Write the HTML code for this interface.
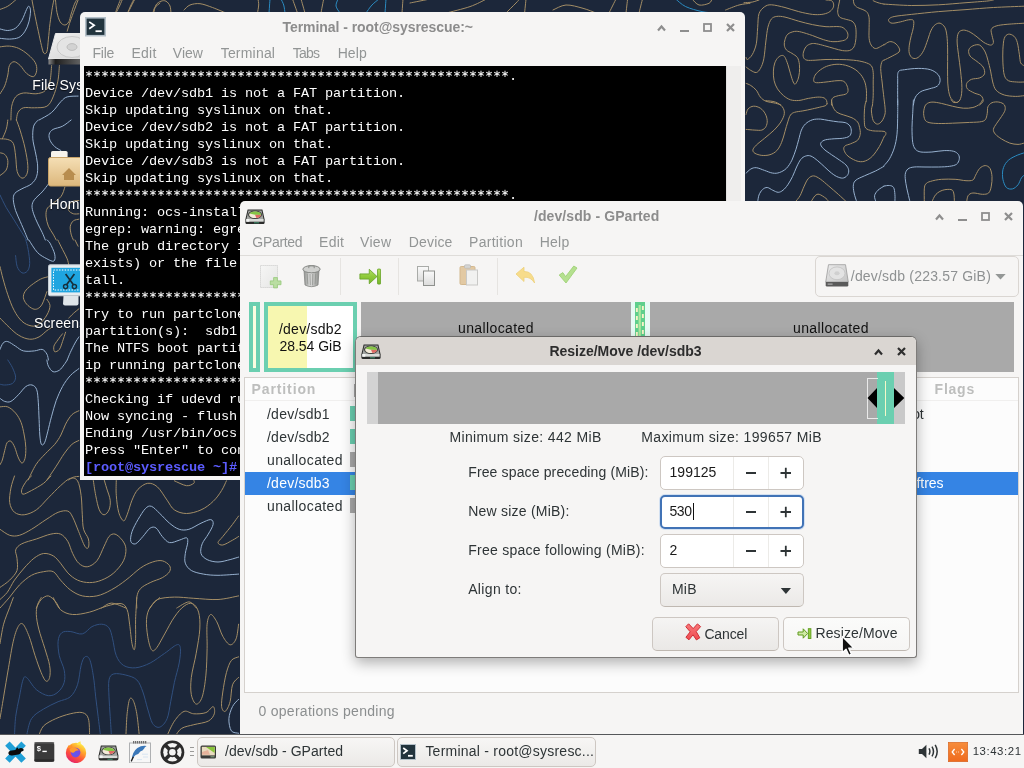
<!DOCTYPE html>
<html><head><meta charset="utf-8"><title>desktop</title>
<style>
html,body{margin:0;padding:0;}
body{width:1024px;height:768px;overflow:hidden;position:relative;background:#1c273a;font-family:'Liberation Sans',sans-serif;}
div,span.t,svg{position:absolute;box-sizing:border-box;}
span.t{white-space:pre;display:block;}
.f{font-family:'Liberation Sans',sans-serif;}
.m{font-family:'Liberation Mono',monospace;}
#root{left:0;top:0;width:1024px;height:768px;overflow:hidden;will-change:transform;}

</style></head>
<body>
<div id="root">
<svg style="left:0;top:0" width="1024" height="768" viewBox="0 0 1024 768" fill="none" stroke-width="1" stroke-linecap="round"><path stroke="#a48e66" d="M746.1 57.4C746.3 57.8 746.4 59.9 747.4 59.5C748.4 59.0 750.7 57.3 752.2 54.7C753.7 52.1 755.4 48.3 756.3 43.8C757.2 39.2 757.2 32.4 757.7 27.3C758.1 22.3 757.9 17.1 759.0 13.7C760.2 10.3 762.5 8.3 764.5 6.8C766.6 5.4 767.9 4.7 771.3 4.8C774.8 4.9 780.5 6.4 785.0 7.5C789.6 8.7 794.1 10.5 798.7 11.6C803.2 12.8 808.5 13.9 812.4 14.4C816.2 14.8 819.2 14.7 821.9 14.4C824.7 14.0 826.9 13.3 828.8 12.3C830.6 11.3 832.1 9.6 832.9 8.2C833.7 6.8 833.8 5.4 833.6 4.1C833.3 2.8 832.8 1.4 831.5 0.7C830.3 0.0 826.9 0.1 826.0 0.0M746.1 67.0C746.8 67.6 749.1 69.5 750.8 70.4C752.5 71.3 754.7 72.8 756.3 72.5C757.9 72.1 759.2 70.6 760.4 68.4C761.7 66.1 762.9 63.3 763.8 58.8C764.7 54.2 765.2 46.3 765.9 41.0C766.6 35.8 767.0 31.0 767.9 27.3C768.8 23.7 769.9 21.0 771.3 19.1C772.8 17.3 774.5 16.7 776.8 16.4C779.1 16.1 781.4 16.3 785.0 17.1C788.7 17.9 794.1 19.9 798.7 21.2C803.2 22.4 807.8 23.7 812.4 24.6C816.9 25.5 821.5 26.3 826.0 26.7C830.6 27.0 836.5 26.2 839.7 26.7C842.9 27.1 843.8 28.1 845.2 29.4C846.5 30.6 847.7 32.6 847.9 34.2C848.1 35.8 847.7 37.8 846.5 39.0C845.4 40.1 843.4 40.6 841.1 41.0C838.8 41.5 835.8 41.9 832.9 41.7C829.9 41.5 826.7 40.7 823.3 39.6C819.9 38.6 816.0 36.8 812.4 35.5C808.7 34.3 804.4 32.8 801.4 32.1C798.5 31.4 796.9 31.1 794.6 31.4C792.3 31.8 789.3 32.8 787.8 34.2C786.2 35.5 785.6 37.8 785.0 39.6C784.4 41.5 784.1 43.4 784.3 45.1C784.6 46.8 785.1 48.5 786.4 49.9C787.6 51.3 790.0 52.1 791.9 53.3C793.7 54.6 796.1 55.6 797.3 57.4C798.6 59.2 799.0 61.8 799.4 64.3C799.7 66.8 799.6 70.0 799.4 72.5C799.1 75.0 798.7 77.4 798.0 79.3C797.3 81.2 796.1 83.6 795.3 84.1C794.5 84.5 794.0 83.7 793.2 82.0C792.4 80.3 791.4 76.8 790.5 73.8C789.6 70.9 788.7 67.0 787.8 64.3C786.8 61.5 785.9 58.9 785.0 57.4C784.1 55.9 783.4 55.4 782.3 55.4C781.1 55.4 779.4 56.2 778.2 57.4C776.9 58.7 775.6 60.6 774.8 62.9C774.0 65.2 773.5 68.1 773.4 71.1C773.3 74.1 773.4 77.7 774.1 80.7C774.8 83.6 775.9 86.4 777.5 88.9C779.1 91.4 781.5 93.9 783.6 95.7C785.8 97.5 788.0 99.0 790.5 99.8C793.0 100.6 795.7 100.7 798.7 100.5C801.7 100.3 805.1 99.0 808.3 98.4C811.5 97.9 815.2 97.2 817.8 97.1C820.5 97.0 822.5 97.3 824.0 97.9C825.4 98.5 826.1 99.6 826.6 100.6C827.1 101.6 826.9 103.4 827.0 103.9M853.4 0.0C853.5 0.7 853.4 2.8 854.1 4.1C854.7 5.4 856.0 6.6 857.5 7.5C859.0 8.4 861.4 8.8 862.9 9.6C864.5 10.4 866.0 10.9 867.1 12.3C868.1 13.7 868.8 15.3 869.1 17.8C869.4 20.3 869.1 23.9 869.1 27.3C869.1 30.8 868.8 35.3 869.1 38.3C869.4 41.2 870.1 43.4 871.2 45.1C872.2 46.8 873.7 48.3 875.3 48.5C876.9 48.8 879.3 47.2 880.7 46.5C882.2 45.8 883.5 44.8 884.0 44.4M839.7 0.0C839.5 1.1 838.7 4.8 838.3 6.8C838.0 8.9 837.4 10.6 837.7 12.3C837.9 14.0 838.5 16.0 839.7 17.1C841.0 18.2 843.1 18.5 845.2 19.1C847.2 19.8 850.3 20.1 852.0 21.2C853.7 22.3 854.7 23.8 855.4 26.0C856.1 28.1 856.1 31.4 856.1 34.2C856.1 36.9 855.9 40.1 855.4 42.4C855.0 44.7 854.4 46.5 853.4 47.9C852.4 49.2 851.1 50.1 849.3 50.6C847.5 51.0 844.9 50.9 842.4 50.6C839.9 50.2 837.2 49.3 834.2 48.5C831.3 47.7 827.6 46.6 824.7 45.8C821.7 45.0 818.7 44.1 816.5 43.8C814.2 43.4 812.7 43.3 811.0 43.8C809.3 44.2 807.5 45.1 806.2 46.5C805.0 47.9 803.9 50.1 803.5 52.0C803.0 53.8 802.9 56.1 803.5 57.4C804.0 58.8 805.0 59.7 806.9 60.2C808.8 60.6 811.9 60.3 815.1 60.2C818.3 60.0 821.9 59.6 826.0 59.5C830.1 59.4 835.1 59.4 839.7 59.5C844.3 59.6 849.3 59.7 853.4 60.2C857.5 60.6 861.4 61.3 864.3 62.2C867.3 63.1 869.7 63.9 871.2 65.6C872.6 67.3 872.9 69.7 873.2 72.5C873.5 75.2 873.2 78.2 873.2 82.0C873.2 85.9 873.3 91.9 873.2 95.7C873.1 99.5 872.6 103.5 872.5 105.0M866.2 101.9C866.3 99.9 866.7 93.8 866.4 90.2C866.0 86.7 865.6 83.6 864.3 80.7C863.1 77.7 861.1 74.7 858.8 72.5C856.6 70.2 853.8 68.4 850.6 67.0C847.5 65.6 843.4 64.5 839.7 64.3C836.1 64.0 832.0 64.7 828.8 65.6C825.6 66.5 822.8 68.1 820.6 69.7C818.3 71.3 816.2 73.4 815.1 75.2C814.0 77.0 813.5 79.4 813.7 80.7C814.0 81.9 814.4 82.5 816.5 82.7C818.5 82.9 822.6 82.4 826.0 82.0C829.5 81.7 834.0 80.8 837.0 80.7C839.9 80.6 842.1 80.4 843.8 81.4C845.5 82.3 846.5 84.4 847.2 86.1C847.9 87.8 848.3 90.2 847.9 91.6C847.6 93.0 846.8 93.7 845.2 94.3C843.6 95.0 840.4 95.1 838.3 95.7C836.3 96.3 834.0 96.7 832.9 97.8C831.7 98.8 831.7 100.7 831.5 101.9C831.3 103.1 831.5 104.5 831.5 105.0M746.1 83.4C746.8 83.7 749.1 84.3 750.8 85.5C752.5 86.6 754.7 88.3 756.3 90.2C757.9 92.2 758.8 95.3 760.4 97.1C762.0 98.9 763.4 100.2 765.9 101.2C768.4 102.2 772.9 102.6 775.4 103.2C778.0 103.9 780.0 104.7 780.9 105.0M873.2 0.7C874.0 1.0 876.2 2.2 878.0 2.7C879.8 3.3 883.0 3.9 884.0 4.1M884.0 60.2C883.7 60.4 882.6 60.2 882.1 61.5C881.5 62.9 880.7 64.9 880.7 68.4C880.7 71.8 881.6 77.7 882.1 82.0C882.5 86.4 883.0 90.2 883.5 94.3C883.9 98.5 884.7 103.8 885.0 107.1C885.2 110.3 885.5 111.7 885.0 114.0C884.5 116.4 883.2 119.3 882.0 121.0C880.7 122.7 878.9 124.2 877.4 124.1C876.0 124.1 874.2 122.6 873.2 120.5C872.2 118.3 871.6 113.5 871.4 111.0C871.3 108.5 872.2 106.2 872.4 105.3M744.0 2.7C745.4 2.6 749.7 2.5 752.2 2.1C754.7 1.6 757.9 0.3 759.0 0.0M884.0 4.1C888.6 4.3 902.2 5.4 911.3 5.5C920.5 5.6 929.6 5.2 938.7 4.8C947.8 4.3 958.1 3.3 966.0 2.7C974.0 2.1 982.0 1.5 986.5 1.1C991.1 0.6 992.2 0.2 993.4 0.0M1024.0 6.2C1018.9 6.4 1003.0 7.0 993.4 7.5C983.7 8.1 975.1 8.9 966.0 9.6C956.9 10.3 947.8 10.8 938.7 11.6C929.6 12.4 918.6 13.6 911.3 14.4C904.1 15.2 898.6 15.7 894.9 16.4C891.3 17.1 890.5 17.7 889.5 18.5C888.4 19.3 888.3 20.4 888.8 21.2C889.2 22.0 890.3 23.1 892.2 23.2C894.1 23.4 897.7 22.4 900.4 21.9C903.1 21.3 906.4 20.1 908.6 19.8C910.8 19.6 912.6 19.3 913.4 20.5C914.2 21.8 913.7 24.8 913.4 27.3C913.1 29.9 912.0 32.6 911.3 35.5C910.7 38.5 909.6 42.2 909.3 45.1C909.0 48.1 908.7 51.2 909.3 53.3C909.9 55.5 911.2 57.4 912.7 58.1C914.2 58.8 916.4 58.7 918.2 57.4C920.0 56.2 922.1 53.6 923.6 50.6C925.2 47.6 926.5 43.1 927.8 39.6C929.0 36.2 929.9 32.6 931.2 30.1C932.4 27.6 933.8 25.7 935.3 24.6C936.8 23.5 938.5 22.8 940.1 23.2C941.7 23.7 943.7 25.3 944.8 27.3C946.0 29.4 946.4 32.1 946.9 35.5C947.3 39.0 947.5 43.5 947.6 47.9C947.7 52.2 947.6 56.7 947.6 61.5C947.6 66.3 947.5 72.0 947.6 76.6C947.7 81.1 947.7 85.2 948.3 88.9C948.8 92.5 949.6 96.2 951.0 98.4C952.4 100.7 954.9 102.5 956.5 102.5C958.1 102.5 959.7 100.9 960.6 98.4C961.5 95.9 961.9 92.1 961.9 87.5C961.9 82.9 961.1 76.6 960.6 71.1C960.0 65.6 959.1 59.7 958.5 54.7C957.9 49.7 957.1 44.7 957.1 41.0C957.1 37.4 957.5 34.6 958.5 32.8C959.5 31.0 961.4 30.2 963.3 30.1C965.2 30.0 967.9 31.0 970.1 32.1C972.4 33.3 974.7 35.2 977.0 36.9C979.3 38.6 981.5 41.0 983.8 42.4C986.1 43.8 989.0 45.1 990.6 45.1C992.2 45.1 993.2 44.0 993.4 42.4C993.6 40.8 992.4 37.7 992.0 35.5C991.7 33.4 990.6 31.0 991.3 29.4C992.0 27.8 993.5 26.8 996.1 26.0C998.7 25.1 1002.4 24.8 1007.1 24.3C1011.7 23.9 1021.2 23.4 1024.0 23.2M884.0 45.1C884.9 44.5 887.6 42.0 889.5 41.7C891.3 41.4 893.3 42.0 894.9 43.1C896.5 44.1 898.4 46.4 899.0 47.9C899.7 49.3 900.2 50.6 899.0 52.0C897.9 53.3 894.7 54.7 892.2 56.1C889.7 57.4 885.4 59.5 884.0 60.2M979.7 105.0C980.3 104.4 982.9 102.7 983.1 101.2C983.4 99.6 982.6 97.1 981.1 95.7C979.6 94.3 976.5 94.1 974.2 93.0C972.0 91.8 968.7 90.5 967.4 88.9C966.1 87.3 966.0 85.0 966.7 83.4C967.4 81.8 969.3 80.2 971.5 79.3C973.7 78.4 977.5 78.8 979.7 77.9C981.9 77.0 983.9 75.7 984.5 73.8C985.1 72.0 984.4 69.0 983.1 67.0C981.9 64.9 979.1 63.3 977.0 61.5C974.8 59.7 971.5 58.0 970.1 56.1C968.8 54.1 968.3 51.6 968.8 49.9C969.2 48.2 971.0 46.6 972.9 45.8C974.7 45.0 977.7 44.1 979.7 45.1C981.8 46.1 983.8 49.4 985.2 52.0C986.5 54.5 987.0 57.0 987.9 60.2C988.8 63.3 989.8 67.5 990.6 71.1C991.4 74.7 991.8 78.8 992.7 82.0C993.6 85.2 994.2 88.1 996.1 90.2C998.1 92.4 1001.1 94.0 1004.3 95.0C1007.5 96.0 1012.0 96.3 1015.3 96.4C1018.5 96.5 1022.5 95.8 1024.0 95.7M1024.0 65.6C1023.5 65.2 1021.5 64.7 1020.7 62.9C1019.9 61.1 1019.9 58.1 1019.4 54.7C1018.8 51.3 1018.2 45.5 1017.3 42.4C1016.4 39.3 1015.4 37.6 1013.9 36.2C1012.4 34.9 1010.0 33.8 1008.4 34.2C1006.8 34.5 1005.2 35.8 1004.3 38.3C1003.4 40.8 1003.2 45.1 1002.9 49.2C1002.7 53.3 1002.7 58.6 1002.9 62.9C1003.2 67.2 1003.4 72.2 1004.3 75.2C1005.2 78.2 1006.4 79.5 1008.4 80.7C1010.5 81.8 1014.0 81.8 1016.6 82.0C1019.2 82.3 1022.8 82.0 1024.0 82.0M765.9 100.7C767.5 100.9 772.7 101.0 775.4 102.1C778.2 103.1 780.8 104.9 782.3 106.8C783.8 108.8 784.6 111.2 784.3 113.7C784.1 116.2 782.6 119.1 780.9 121.9C779.2 124.6 776.8 127.3 774.1 130.1C771.3 132.8 767.5 135.8 764.5 138.3C761.5 140.8 758.2 143.2 756.3 145.1C754.4 147.1 753.1 148.5 752.9 149.9C752.7 151.3 753.5 152.4 754.9 153.3C756.4 154.2 759.3 155.1 761.8 155.4C764.3 155.6 767.5 155.5 770.0 154.7C772.5 153.9 774.9 152.6 776.8 150.6C778.8 148.5 780.2 145.6 781.6 142.4C783.0 139.2 784.0 134.9 785.0 131.4C786.0 128.0 786.8 124.6 787.8 121.9C788.7 119.1 789.3 116.6 790.5 115.0C791.6 113.4 792.5 113.0 794.6 112.3C796.6 111.6 799.8 111.5 802.8 110.9C805.8 110.4 809.3 109.6 812.4 108.9C815.4 108.2 819.0 107.4 821.2 106.8C823.5 106.3 824.8 106.0 825.8 105.5C826.7 104.9 826.8 103.9 827.0 103.6M746.1 114.4C746.4 113.4 746.8 110.3 748.1 108.9C749.4 107.5 751.5 106.3 753.6 106.2C755.6 106.0 758.5 107.0 760.4 108.2C762.3 109.5 764.1 111.6 765.2 113.7C766.3 115.7 767.1 118.3 767.2 120.5C767.4 122.7 766.8 125.1 765.9 126.7C765.0 128.3 763.6 129.5 761.8 130.1C760.0 130.6 757.6 130.2 754.9 130.1C752.3 130.0 747.5 129.5 746.1 129.4M831.5 100.0C831.7 101.1 832.0 104.8 832.9 106.8C833.8 108.9 835.1 110.9 837.0 112.3C838.8 113.7 841.3 114.1 843.8 115.0C846.3 116.0 849.7 116.6 852.0 117.8C854.3 118.9 856.2 120.3 857.5 121.9C858.7 123.5 859.1 125.3 859.5 127.3C860.0 129.4 860.6 132.0 860.2 134.2C859.9 136.3 859.1 138.7 857.5 140.3C855.9 141.9 852.7 142.8 850.6 143.8C848.6 144.7 846.3 144.9 845.2 145.8C844.0 146.7 843.6 147.7 843.8 149.2C844.0 150.7 845.2 153.1 846.5 154.7C847.9 156.3 850.0 157.7 852.0 158.8C854.1 159.9 856.6 161.2 858.8 161.5C861.1 161.9 863.4 161.8 865.7 160.8C868.0 159.9 870.2 158.4 872.5 156.1C874.8 153.7 877.4 149.7 879.4 146.5C881.3 143.3 883.2 138.5 884.0 136.9M865.8 101.6C865.6 102.7 864.8 105.1 864.6 108.2C864.3 111.3 864.1 117.2 864.3 120.5C864.5 123.8 864.3 126.3 865.7 128.0C867.1 129.7 869.5 130.2 872.5 130.8C875.6 131.3 881.8 130.9 884.0 131.4C886.2 132.0 885.9 133.0 885.9 133.9C885.9 134.8 884.3 136.4 884.0 136.9M795.3 201.9C796.1 200.8 798.6 198.3 800.1 195.7C801.5 193.1 802.8 189.0 804.2 186.1C805.5 183.3 806.7 180.3 808.3 178.6C809.9 176.9 811.7 175.8 813.7 175.9C815.8 176.0 818.1 177.6 820.6 179.3C823.1 181.0 825.8 183.6 828.8 186.1C831.7 188.6 835.4 191.7 838.3 194.3C841.3 197.0 845.2 200.6 846.5 201.9M811.0 201.9C811.7 200.8 813.7 197.0 815.1 195.7C816.5 194.5 817.4 193.9 819.2 194.3C821.0 194.8 824.4 197.2 826.0 198.4C827.6 199.7 828.3 201.3 828.8 201.9M982.4 100.0C982.0 100.7 981.3 102.8 979.7 104.1C978.1 105.4 975.6 106.8 972.9 107.5C970.1 108.2 966.7 108.4 963.3 108.2C959.9 108.0 956.0 107.0 952.4 106.2C948.7 105.4 944.8 104.1 941.4 103.4C938.0 102.7 934.4 101.9 931.9 102.1C929.3 102.2 927.6 103.1 926.4 104.1C925.1 105.1 924.8 106.6 924.3 108.2C923.9 109.8 923.5 111.7 923.6 113.7C923.8 115.6 924.1 118.3 925.0 119.8C925.9 121.3 926.8 121.9 929.1 122.6C931.4 123.2 934.8 123.4 938.7 123.5C942.6 123.6 947.8 123.4 952.4 123.2C956.9 123.1 961.5 122.8 966.0 122.6C970.6 122.3 976.5 122.3 979.7 121.9C982.9 121.4 983.9 121.2 985.2 119.8C986.4 118.5 986.8 115.8 987.2 113.7C987.7 111.5 987.1 108.7 987.9 106.8C988.7 105.0 990.2 103.5 992.0 102.7C993.8 101.9 996.8 101.7 998.8 102.1C1000.9 102.4 1003.3 103.4 1004.3 104.8C1005.3 106.2 1005.5 108.3 1005.0 110.3C1004.5 112.2 1002.9 114.2 1001.6 116.4C1000.2 118.6 998.2 121.1 996.8 123.2C995.4 125.4 993.6 127.6 993.4 129.4C993.2 131.2 994.1 132.6 995.4 134.2C996.8 135.8 999.2 137.5 1001.6 139.0C1004.0 140.4 1007.1 142.2 1009.8 143.1C1012.5 144.0 1015.6 144.4 1018.0 144.4C1020.4 144.4 1023.0 143.3 1024.0 143.1M951.0 100.0C951.5 100.4 952.6 102.1 953.7 102.5C954.9 102.8 956.8 102.5 957.8 102.1C958.9 101.6 959.5 100.3 959.9 100.0M924.3 201.9C924.3 199.7 924.1 191.8 924.3 188.9C924.6 185.9 924.7 185.3 925.7 184.1C926.7 182.8 927.9 182.1 930.5 181.4C933.1 180.6 937.3 179.6 941.4 179.3C945.5 179.0 951.0 179.1 955.1 179.3C959.2 179.5 963.1 180.6 966.0 180.7C969.0 180.8 971.3 180.9 972.9 180.0C974.5 179.1 974.5 177.1 975.6 175.2C976.7 173.3 978.1 170.0 979.7 168.4C981.3 166.8 983.5 165.6 985.2 165.6C986.9 165.6 988.8 166.5 990.0 168.4C991.1 170.2 991.8 173.6 992.0 176.6C992.2 179.5 991.9 183.4 991.3 186.1C990.8 188.9 990.1 191.6 988.6 193.0C987.1 194.3 985.1 194.3 982.4 194.3C979.8 194.3 975.3 192.7 972.9 193.0C970.5 193.2 969.1 194.2 968.1 195.7C967.1 197.2 966.9 200.8 966.7 201.9M931.9 201.9C932.5 200.6 934.1 196.3 936.0 194.3C937.8 192.4 940.3 191.0 942.8 190.2C945.3 189.4 949.2 189.1 951.0 189.6C952.8 190.0 953.2 190.9 953.7 193.0C954.3 195.0 954.3 200.4 954.4 201.9M0.0 9.4C1.3 8.9 5.2 7.8 7.8 6.2C10.4 4.7 14.3 1.0 15.6 0.0M32.0 0.0C32.4 2.1 33.3 7.3 34.4 12.5C35.4 17.7 37.1 25.8 38.3 31.2C39.5 36.7 40.5 41.7 41.4 45.3C42.3 49.0 42.8 52.1 43.8 53.1C44.7 54.2 46.1 53.9 46.9 51.6C47.7 49.2 47.9 43.8 48.4 39.1C49.0 34.4 49.3 28.6 50.0 23.4C50.7 18.2 51.7 11.7 52.3 7.8C53.0 3.9 53.6 1.3 53.9 0.0M55.5 0.0C55.7 2.1 56.2 8.9 57.0 12.5C57.8 16.1 58.9 19.8 60.2 21.9C61.5 24.0 63.4 25.0 64.8 25.0C66.3 25.0 67.7 23.7 68.8 21.9C69.8 20.1 70.2 16.9 71.1 14.1C72.0 11.2 73.3 7.0 74.2 4.7C75.1 2.3 76.2 0.8 76.6 0.0M78.1 0.0C77.3 2.1 74.9 8.6 73.4 12.5C72.0 16.4 70.6 20.3 69.5 23.4C68.5 26.6 67.6 29.9 67.2 31.2M0.0 46.9C1.6 46.7 6.2 45.8 9.4 46.1C12.5 46.4 15.6 47.0 18.8 48.4C21.9 49.9 25.4 52.3 28.1 54.7C30.9 57.0 33.7 59.9 35.2 62.5C36.6 65.1 37.0 68.0 36.7 70.3C36.5 72.7 35.3 76.0 33.6 76.6C31.9 77.1 28.8 75.3 26.6 73.4C24.3 71.6 22.4 67.6 20.3 65.6C18.2 63.7 15.9 61.7 14.1 61.7C12.2 61.7 10.4 63.4 9.4 65.6C8.3 67.8 8.6 71.6 7.8 75.0C7.0 78.4 6.0 82.8 4.7 85.9C3.4 89.1 0.8 92.4 0.0 93.8M51.6 65.6C51.3 68.2 51.0 77.1 50.0 81.2C49.0 85.4 47.7 88.5 45.3 90.6C43.0 92.7 39.6 93.4 35.9 93.8C32.3 94.1 26.8 92.4 23.4 93.0C20.1 93.5 17.6 94.7 15.6 96.9C13.7 99.1 12.5 102.4 11.7 106.2C10.9 110.1 11.1 117.7 10.9 120.0M59.4 65.6C59.1 68.2 58.9 76.0 57.8 81.2C56.8 86.5 54.9 92.7 53.1 96.9C51.3 101.0 50.0 104.4 46.9 106.2C43.8 108.1 38.3 107.6 34.4 107.8C30.5 108.1 26.2 107.0 23.4 107.8C20.7 108.6 19.1 110.5 18.0 112.5C16.8 114.5 16.7 118.8 16.4 120.0M120.3 0.0C119.8 1.3 118.0 5.7 117.2 7.8C116.4 9.9 115.9 11.7 115.6 12.5M134.4 0.0C133.6 1.6 130.7 7.3 129.7 9.4C128.6 11.5 128.4 12.0 128.1 12.5M160.0 3.1C159.1 3.9 155.8 6.2 154.7 7.8C153.5 9.4 153.4 11.7 153.1 12.5M0.0 138.8C1.3 138.9 5.6 138.8 7.8 139.5C10.0 140.3 12.0 140.7 13.3 143.4C14.6 146.2 15.0 151.2 15.6 155.9C16.3 160.6 16.1 167.9 17.2 171.6C18.2 175.3 20.3 177.6 21.9 178.1C23.4 178.6 25.6 176.8 26.6 174.7C27.6 172.6 28.1 169.7 27.8 165.3C27.6 160.9 26.2 153.9 25.0 148.1C23.8 142.4 21.7 135.6 20.3 130.9C18.9 126.2 17.1 121.8 16.4 120.0M7.8 120.0C7.6 121.6 7.2 126.2 6.2 129.4C5.3 132.5 3.0 137.2 2.3 138.8M0.0 152.8C0.8 153.1 3.4 153.1 4.7 154.4C6.0 155.7 7.6 158.0 7.8 160.6C8.1 163.2 7.6 167.5 6.2 170.0C4.9 172.5 1.0 174.6 0.0 175.5M64.8 187.2C64.2 188.8 63.2 193.7 60.9 196.6C58.7 199.4 53.9 202.3 51.6 204.4C49.2 206.5 47.8 207.0 46.9 209.1C46.0 211.1 45.8 214.0 46.1 216.9C46.4 219.7 47.3 223.4 48.4 226.2C49.6 229.1 51.8 231.8 53.1 234.1C54.4 236.4 55.7 239.0 56.2 240.0M78.9 200.5C78.0 200.6 75.1 200.5 73.4 201.2C71.7 202.0 69.5 203.6 68.8 205.2C68.0 206.7 68.0 209.2 68.8 210.6C69.5 212.1 71.7 213.2 73.4 213.8C75.1 214.3 78.0 213.8 78.9 213.8M78.9 219.2C78.0 219.5 74.9 219.6 73.4 220.8C72.0 222.0 70.7 224.0 70.3 226.2C69.9 228.5 70.6 231.8 71.1 234.1C71.6 236.4 73.0 239.0 73.4 240.0M0.0 266.6C0.5 268.6 1.8 274.4 3.1 279.1C4.4 283.8 6.0 289.5 7.8 294.7C9.6 299.9 11.7 305.9 14.1 310.3C16.4 314.7 19.0 318.6 21.9 321.2C24.7 323.9 28.4 325.4 31.2 325.9C34.1 326.5 36.5 326.2 39.1 324.4C41.7 322.6 45.1 318.1 46.9 315.0C48.7 311.9 50.0 308.2 50.0 305.6C50.0 303.0 47.4 300.4 46.9 299.4M48.4 276.7C47.1 277.1 43.5 277.6 40.6 279.1C37.8 280.5 33.9 283.2 31.2 285.3C28.6 287.4 26.3 289.5 25.0 291.6C23.7 293.6 23.2 295.7 23.4 297.8C23.7 299.9 25.0 302.2 26.6 304.1C28.1 305.9 31.0 308.0 32.8 308.8C34.6 309.5 35.9 309.5 37.5 308.8C39.1 308.0 40.6 306.9 42.2 304.1C43.8 301.2 46.1 293.6 46.9 291.6M57.8 240.0C58.6 241.6 60.9 246.2 62.5 249.4C64.1 252.5 66.1 256.1 67.2 258.8C68.2 261.4 68.5 264.0 68.8 265.0M75.0 240.0C75.5 241.0 77.6 245.2 78.1 246.2M0.0 318.1C1.6 319.7 6.2 324.6 9.4 327.5C12.5 330.4 15.4 333.4 18.8 335.3C22.1 337.3 26.3 339.0 29.7 339.2C33.1 339.5 36.2 338.3 39.1 336.9C41.9 335.4 44.8 332.2 46.9 330.6C49.0 329.1 50.8 328.0 51.6 327.5M62.5 333.8C61.7 334.8 59.2 337.9 57.8 340.0C56.4 342.1 54.4 344.3 53.9 346.2C53.4 348.2 53.8 351.2 54.7 351.7C55.6 352.2 58.1 351.1 59.4 349.4C60.7 347.7 61.5 344.4 62.5 341.6C63.5 338.7 65.1 333.8 65.6 332.2M78.9 308.8C78.0 309.5 75.1 311.9 73.4 313.4C71.7 315.0 69.5 317.3 68.8 318.1M0.0 406.9C1.3 406.9 5.2 405.8 7.8 406.9C10.4 407.9 13.4 410.5 15.6 413.1C17.8 415.7 19.7 418.9 21.1 422.5C22.5 426.1 23.4 430.8 24.2 435.0C25.0 439.2 25.7 443.6 25.8 447.5C25.9 451.4 25.7 455.8 25.0 458.4C24.3 461.0 23.0 463.4 21.9 463.1C20.7 462.9 19.1 459.5 18.0 456.9C16.8 454.3 16.0 450.1 14.8 447.5C13.7 444.9 12.2 442.0 10.9 441.2C9.6 440.5 8.1 441.2 7.0 442.8C6.0 444.4 5.5 447.8 4.7 450.6C3.9 453.5 3.1 457.7 2.3 460.0C1.6 462.3 0.4 463.9 0.0 464.7M78.9 410.8C77.7 411.4 74.1 412.5 71.9 414.7C69.7 416.9 67.4 420.7 65.6 424.1C63.8 427.4 62.8 431.6 60.9 435.0C59.1 438.4 57.3 441.2 54.7 444.4C52.1 447.5 48.4 450.4 45.3 453.8C42.2 457.1 38.8 460.3 35.9 464.7C33.1 469.1 29.4 477.4 28.1 480.0M78.9 440.5C77.7 441.1 74.3 442.2 71.9 444.4C69.4 446.6 66.7 450.1 64.1 453.8C61.5 457.4 59.1 461.9 56.2 466.2C53.4 470.6 48.4 477.7 46.9 480.0M78.9 476.4C78.0 476.5 75.1 476.6 73.4 477.2C71.7 477.8 69.5 479.5 68.8 480.0M50.9 476.0C49.6 477.2 46.8 480.8 43.6 483.3C40.4 485.7 34.9 488.7 31.5 490.5C28.1 492.3 24.6 494.4 23.0 494.2C21.4 494.0 21.2 491.5 21.8 489.3C22.4 487.1 25.0 483.1 26.6 480.8C28.3 478.6 30.7 476.8 31.5 476.0M14.5 476.0C13.9 478.0 11.7 483.7 10.9 488.1C10.1 492.5 9.1 498.6 9.7 502.6C10.3 506.7 12.1 510.3 14.5 512.3C17.0 514.3 20.6 515.2 24.2 514.8C27.9 514.3 32.3 512.7 36.3 509.9C40.4 507.1 44.4 501.8 48.4 497.8C52.5 493.8 56.9 488.9 60.5 485.7C64.2 482.5 67.4 479.2 70.2 478.4C73.1 477.6 75.7 478.0 77.5 480.8C79.3 483.7 80.3 489.7 81.1 495.4C81.9 501.0 81.9 509.1 82.3 514.8C82.7 520.4 82.5 525.2 83.6 529.3C84.6 533.3 87.6 535.9 88.4 539.0C89.2 542.0 89.0 546.2 88.4 547.4C87.8 548.7 86.4 548.9 84.8 546.2C83.2 543.6 80.7 536.5 78.7 531.7C76.7 526.9 74.5 520.6 72.7 517.2C70.8 513.7 70.2 511.9 67.8 511.1C65.4 510.3 61.8 510.9 58.1 512.3C54.5 513.7 50.5 516.8 46.0 519.6C41.6 522.4 35.9 526.7 31.5 529.3C27.0 531.9 23.0 534.3 19.4 535.3C15.7 536.3 12.9 536.3 9.7 535.3C6.5 534.3 1.6 530.3 0.0 529.3M93.2 479.6C93.6 482.3 94.7 490.3 95.7 495.4C96.7 500.4 97.9 506.7 99.3 509.9C100.7 513.1 102.5 514.8 104.1 514.8C105.8 514.8 108.0 512.3 109.0 509.9C110.0 507.5 110.6 503.9 110.2 500.2C109.8 496.6 107.6 491.5 106.6 488.1C105.6 484.7 104.5 481.0 104.1 479.6M116.3 479.6C116.3 482.3 115.8 489.9 116.3 495.4C116.7 500.8 117.5 508.1 118.7 512.3C119.9 516.6 122.1 520.4 123.5 520.8C124.9 521.2 125.7 518.2 127.1 514.8C128.6 511.3 130.2 504.5 132.0 500.2C133.8 496.0 135.4 492.1 138.0 489.3C140.7 486.5 144.5 483.7 147.7 483.3C151.0 482.9 154.2 484.1 157.4 486.9C160.7 489.7 164.3 496.4 167.1 500.2C169.9 504.1 171.1 507.7 174.4 509.9C177.6 512.1 182.0 513.5 186.5 513.5C190.9 513.5 196.6 511.9 201.0 509.9C205.5 507.9 209.7 504.7 213.1 501.4C216.6 498.2 219.4 494.0 221.6 490.5C223.8 487.1 225.6 482.5 226.4 480.8M174.4 480.8C176.4 481.7 183.3 485.3 186.5 485.7C189.7 486.1 192.5 484.2 193.8 483.3C195.0 482.4 193.8 480.8 193.8 480.4M0.0 587.4C1.6 586.2 6.9 583.0 9.7 580.1C12.5 577.3 15.7 574.1 17.0 570.5C18.2 566.8 17.2 561.8 17.0 558.3C16.8 554.9 14.9 552.3 15.7 549.9C16.5 547.4 18.4 545.6 21.8 543.8C25.2 542.0 31.5 540.6 36.3 539.0C41.2 537.4 46.8 534.9 50.9 534.1C54.9 533.3 57.7 532.9 60.5 534.1C63.4 535.3 65.8 538.2 67.8 541.4C69.8 544.6 70.8 549.9 72.7 553.5C74.5 557.1 76.3 561.0 78.7 563.2C81.1 565.4 84.2 567.2 87.2 566.8C90.2 566.4 94.1 564.2 96.9 560.8C99.7 557.3 102.1 550.3 104.1 546.2C106.2 542.2 107.2 538.6 109.0 536.5C110.8 534.5 112.8 533.5 115.0 534.1C117.3 534.7 120.5 537.8 122.3 540.2C124.1 542.6 125.7 545.2 125.9 548.7C126.1 552.1 125.5 556.7 123.5 560.8C121.5 564.8 117.5 569.6 113.8 572.9C110.2 576.1 105.8 578.5 101.7 580.1C97.7 581.8 93.6 582.6 89.6 582.6C85.6 582.6 81.1 581.8 77.5 580.1C73.9 578.5 70.6 575.7 67.8 572.9C65.0 570.1 63.0 566.0 60.5 563.2C58.1 560.4 56.1 557.5 53.3 555.9C50.5 554.3 46.8 553.1 43.6 553.5C40.4 553.9 37.1 555.9 33.9 558.3C30.7 560.8 27.4 564.4 24.2 568.0C21.0 571.7 17.4 576.1 14.5 580.1C11.7 584.2 9.7 589.0 7.3 592.3C4.8 595.5 1.2 598.3 0.0 599.5M0.0 608.0C1.6 606.2 6.5 600.9 9.7 597.1C12.9 593.3 15.7 588.6 19.4 585.0C23.0 581.4 27.4 577.5 31.5 575.3C35.5 573.1 40.0 572.3 43.6 571.7C47.2 571.1 50.5 570.3 53.3 571.7C56.1 573.1 57.7 577.1 60.5 580.1C63.4 583.2 66.6 587.2 70.2 589.8C73.9 592.5 77.9 594.9 82.3 595.9C86.8 596.9 92.0 596.9 96.9 595.9C101.7 594.9 106.6 592.5 111.4 589.8C116.3 587.2 121.1 583.8 125.9 580.1C130.8 576.5 136.0 571.1 140.5 568.0C144.9 565.0 148.9 563.2 152.6 562.0C156.2 560.8 159.4 560.2 162.3 560.8C165.1 561.4 168.3 563.8 169.5 565.6C170.7 567.4 170.7 569.6 169.5 571.7C168.3 573.7 165.5 575.9 162.3 577.7C159.0 579.5 153.8 580.7 150.2 582.6C146.5 584.4 142.7 586.2 140.5 588.6C138.2 591.0 137.4 593.9 136.8 597.1C136.2 600.3 136.8 606.2 136.8 608.0M238.6 516.0C237.5 517.4 235.1 521.0 232.5 524.4C229.9 527.9 225.2 533.5 222.8 536.5C220.4 539.6 218.0 541.2 218.0 542.6C218.0 544.0 220.4 545.4 222.8 545.0C225.2 544.6 229.9 541.6 232.5 540.2C235.1 538.8 237.5 537.2 238.6 536.5M36.3 608.0C37.1 606.6 39.2 601.5 41.2 599.5C43.2 597.5 46.0 595.5 48.4 595.9C50.9 596.3 53.9 599.9 55.7 601.9C57.5 604.0 58.7 607.0 59.3 608.0M150.2 608.0C151.4 606.6 153.4 601.3 157.4 599.5C161.5 597.7 168.3 597.3 174.4 597.1C180.4 596.9 186.5 597.9 193.8 598.3C201.0 598.7 210.5 599.9 218.0 599.5C225.4 599.1 235.1 596.5 238.6 595.9M176.8 608.0C178.8 607.0 185.7 601.9 188.9 601.9C192.1 601.9 195.0 607.0 196.2 608.0M101.7 608.0C103.3 607.2 107.4 603.1 111.4 603.1C115.4 603.1 123.5 607.2 125.9 608.0M0.0 718.7C0.6 715.0 2.2 705.4 3.6 696.9C5.0 688.4 6.9 677.1 8.5 667.8C10.1 658.5 11.7 648.0 13.3 641.2C14.9 634.3 16.5 629.5 18.2 626.6C19.8 623.8 21.2 622.6 23.0 624.2C24.8 625.8 27.0 631.1 29.1 636.3C31.1 641.6 33.1 649.6 35.1 655.7C37.1 661.8 39.4 668.4 41.2 672.7C43.0 676.9 44.6 680.3 46.0 681.1C47.4 681.9 49.0 680.1 49.6 677.5C50.3 674.9 50.5 670.2 49.6 665.4C48.8 660.5 46.6 654.5 44.8 648.4C43.0 642.4 40.2 634.7 38.8 629.1C37.3 623.4 36.5 618.6 36.3 614.5C36.1 610.5 36.7 607.7 37.5 604.8C38.3 602.0 40.6 598.8 41.2 597.6M53.3 597.6C54.5 599.6 57.3 606.9 60.5 609.7C63.8 612.5 67.8 614.1 72.7 614.5C77.5 614.9 84.0 613.5 89.6 612.1C95.3 610.7 101.3 607.5 106.6 606.1C111.8 604.6 117.7 603.0 121.1 603.6C124.5 604.2 125.7 606.3 127.1 609.7C128.6 613.1 128.8 618.6 129.6 624.2C130.4 629.9 131.2 639.4 132.0 643.6C132.8 647.8 133.8 650.5 134.4 649.6C135.0 648.8 135.4 643.8 135.6 638.8C135.8 633.7 135.4 626.2 135.6 619.4C135.8 612.5 136.6 601.2 136.8 597.6M159.8 597.6C158.2 599.2 152.4 603.6 150.2 607.3C147.9 610.9 146.9 614.5 146.5 619.4C146.1 624.2 146.9 631.3 147.7 636.3C148.5 641.4 150.0 647.6 151.4 649.6C152.8 651.7 154.0 651.1 156.2 648.4C158.4 645.8 161.7 639.2 164.7 633.9C167.7 628.7 171.1 621.6 174.4 617.0C177.6 612.3 181.0 608.3 184.1 606.1C187.1 603.8 190.1 602.6 192.5 603.6C195.0 604.6 197.4 607.9 198.6 612.1C199.8 616.3 200.2 622.2 199.8 629.1C199.4 635.9 197.6 645.2 196.2 653.3C194.8 661.4 192.1 670.6 191.3 677.5C190.5 684.4 190.5 690.0 191.3 694.5C192.1 698.9 194.4 703.7 196.2 704.1C198.0 704.5 200.6 701.7 202.2 696.9C203.8 692.0 205.1 683.2 205.9 675.1C206.7 667.0 206.9 656.9 207.1 648.4C207.3 640.0 206.5 629.9 207.1 624.2C207.7 618.6 209.1 614.9 210.7 614.5C212.3 614.1 214.7 618.2 216.8 621.8C218.8 625.4 220.6 632.5 222.8 636.3C225.0 640.2 227.9 644.4 230.1 644.8C232.3 645.2 234.7 642.2 236.1 638.8C237.5 635.3 238.2 626.6 238.6 624.2M238.6 656.9C237.3 657.5 233.3 657.9 231.3 660.5C229.3 663.2 227.9 667.4 226.4 672.7C225.0 677.9 223.6 686.4 222.8 692.0C222.0 697.7 221.2 703.3 221.6 706.6C222.0 709.8 223.8 712.2 225.2 711.4C226.6 710.6 228.9 706.2 230.1 701.7C231.3 697.3 231.1 688.8 232.5 684.8C233.9 680.7 237.5 678.7 238.6 677.5M38.8 735.6C39.6 734.0 40.8 728.8 43.6 725.9C46.4 723.1 51.3 720.7 55.7 718.7C60.1 716.7 65.8 714.8 70.2 713.8C74.7 712.8 79.3 711.8 82.3 712.6C85.4 713.4 87.2 714.8 88.4 718.7C89.6 722.5 89.4 732.8 89.6 735.6M125.9 735.6C126.1 732.0 126.5 719.9 127.1 713.8C127.8 707.8 128.6 701.5 129.6 699.3C130.6 697.1 132.0 698.1 133.2 700.5C134.4 702.9 135.8 708.0 136.8 713.8C137.8 719.7 138.9 732.0 139.3 735.6M167.1 735.6C168.3 733.2 171.6 725.1 174.4 721.1C177.2 717.1 180.8 712.6 184.1 711.4C187.3 710.2 190.1 713.6 193.8 713.8C197.4 714.0 202.6 713.8 205.9 712.6C209.1 711.4 211.7 706.4 213.1 706.6C214.5 706.8 215.1 711.4 214.3 713.8C213.5 716.3 211.7 719.3 208.3 721.1C204.9 722.9 198.2 723.5 193.8 724.7C189.3 725.9 184.7 726.5 181.6 728.4C178.6 730.2 176.6 734.4 175.6 735.6M0.0 643.6C0.6 640.4 2.0 630.3 3.6 624.2C5.2 618.2 8.1 611.7 9.7 607.3C11.3 602.8 12.7 599.2 13.3 597.6M116.0 13.0C116.7 11.7 118.9 7.3 120.0 5.0C121.1 2.7 122.1 0.0 122.5 -1.0M127.5 13.0C128.1 11.7 129.9 7.3 131.0 5.0C132.1 2.7 133.5 0.0 134.0 -1.0M153.7 13.0C154.1 11.7 154.8 7.0 156.0 5.0C157.2 3.0 159.3 1.8 161.0 1.2C162.7 0.6 164.5 0.4 166.0 1.2C167.5 2.0 169.2 4.0 170.0 6.0C170.8 8.0 170.8 11.8 171.0 13.0M184.0 10.0C185.0 9.2 187.3 6.0 190.0 5.0C192.7 4.0 196.2 3.3 200.0 3.7C203.8 4.1 208.2 6.0 212.5 7.5C216.8 9.1 223.8 12.1 226.0 13.0M257.5 13.0C257.7 11.7 258.6 7.3 258.7 5.0C258.8 2.7 258.1 0.0 258.0 -1.0M292.5 -1.0C293.3 1.3 296.7 10.7 297.5 13.0M301.0 -1.0C301.7 1.3 304.3 10.7 305.0 13.0M321.0 13.0C321.4 10.7 323.2 1.3 323.7 -1.0M402.0 13.0C402.2 10.7 402.8 1.3 403.0 -1.0M410.0 3.0C413.3 2.3 426.7 -0.3 430.0 -1.0M446.5 13.0C450.4 11.9 463.3 8.9 470.0 6.6C476.7 4.3 483.8 0.3 486.5 -1.0M506.0 13.0C507.7 11.3 513.7 5.3 516.0 3.0C518.3 0.7 519.0 -0.3 519.6 -1.0M524.6 13.0C524.8 10.7 525.8 1.3 526.0 -1.0M553.0 10.0C555.2 9.2 561.0 5.3 566.0 5.0C571.0 4.7 578.0 7.0 583.0 8.3C588.0 9.6 593.8 12.2 596.0 13.0M609.0 13.0C610.2 10.7 614.8 1.3 616.0 -1.0M626.0 13.0C626.3 10.7 627.3 1.3 627.6 -1.0M639.0 13.0C639.6 10.7 641.9 1.3 642.5 -1.0M692.0 -1.0C693.2 0.0 696.2 4.3 699.0 5.0C701.8 5.7 706.8 4.3 709.0 3.3C711.2 2.3 711.5 -0.3 712.0 -1.0M725.6 10.0C727.8 9.2 734.9 6.1 739.0 5.0C743.1 3.9 748.2 3.6 750.0 3.3"/><path stroke="#97b1cf" d="M897.7 105.0C897.7 101.2 897.6 87.6 897.7 82.0C897.8 76.5 897.2 73.8 898.4 71.8C899.5 69.7 901.2 70.3 904.5 69.7C907.8 69.2 913.9 68.4 918.2 68.4C922.5 68.4 927.2 68.7 930.5 69.7C933.8 70.8 936.4 72.7 938.0 74.5C939.6 76.3 940.2 78.7 940.1 80.7C939.9 82.6 939.1 84.8 937.3 86.1C935.5 87.5 931.9 88.0 929.1 88.9C926.4 89.8 923.2 90.2 920.9 91.6C918.6 93.0 916.7 94.8 915.4 97.1C914.2 99.3 913.7 103.7 913.4 105.0M746.1 173.1C746.8 172.5 749.1 170.0 750.8 169.0C752.5 168.1 754.0 167.5 756.3 167.7C758.6 167.9 761.8 169.5 764.5 170.4C767.2 171.3 770.2 172.8 772.7 173.1C775.2 173.5 777.3 173.3 779.5 172.5C781.8 171.7 784.3 170.4 786.4 168.4C788.4 166.3 790.3 163.3 791.9 160.2C793.4 157.0 794.8 152.6 796.0 149.2C797.1 145.8 797.8 142.8 798.7 139.6C799.6 136.5 800.3 132.7 801.4 130.1C802.6 127.5 803.7 125.6 805.5 123.9C807.3 122.2 809.9 120.6 812.4 119.8C814.9 119.0 817.8 119.0 820.6 119.1C823.3 119.3 825.8 120.1 828.8 120.5C831.7 121.0 835.6 121.5 838.3 121.9C841.1 122.2 843.2 121.9 845.2 122.6C847.1 123.2 848.9 124.5 850.0 126.0C851.0 127.5 851.4 129.7 851.3 131.4C851.2 133.2 850.8 135.1 849.3 136.2C847.8 137.4 845.4 137.8 842.4 138.3C839.5 138.7 834.6 138.6 831.5 139.0C828.4 139.3 825.8 139.5 824.0 140.3C822.2 141.1 820.7 142.4 820.6 143.8C820.5 145.1 821.5 146.7 823.3 148.5C825.1 150.4 828.8 152.8 831.5 154.7C834.2 156.6 837.3 158.4 839.7 160.2C842.1 161.9 844.4 163.3 845.9 164.9C847.3 166.5 848.3 168.1 848.6 169.7C848.9 171.3 848.7 173.1 847.9 174.5C847.1 175.9 845.4 177.5 843.8 177.9C842.2 178.4 840.4 178.0 838.3 177.2C836.3 176.5 833.8 174.9 831.5 173.1C829.2 171.4 826.9 169.0 824.7 167.0C822.4 164.9 820.1 162.7 817.8 160.8C815.6 159.0 813.0 156.9 811.0 156.1C808.9 155.3 807.2 155.5 805.5 156.1C803.8 156.6 802.2 157.7 800.7 159.5C799.3 161.3 798.0 164.1 796.6 167.0C795.3 169.8 794.0 173.6 792.5 176.6C791.1 179.5 789.3 182.5 787.8 184.8C786.2 187.0 784.6 189.0 783.0 190.2C781.4 191.5 779.9 192.3 778.2 192.3C776.5 192.3 774.5 191.0 772.7 190.2C770.9 189.4 769.0 187.6 767.2 187.5C765.5 187.4 763.8 188.3 762.5 189.6C761.1 190.8 759.8 193.0 759.0 195.0C758.2 197.1 757.9 200.7 757.7 201.9M884.0 166.3C882.5 167.1 878.5 169.5 875.3 171.1C872.0 172.7 867.5 174.4 864.3 175.9C861.1 177.4 857.9 178.5 856.1 180.0C854.3 181.5 853.7 182.6 853.4 184.8C853.0 186.9 853.5 190.1 854.1 193.0C854.6 195.8 856.3 200.4 856.8 201.9M884.0 186.1C883.0 186.8 879.6 188.6 878.0 190.2C876.4 191.8 874.9 193.8 874.6 195.7C874.2 197.6 875.7 200.8 875.9 201.9M897.7 100.0C897.7 102.3 897.8 108.0 897.7 113.7C897.6 119.4 897.6 128.5 897.0 134.2C896.4 139.9 895.5 143.8 894.3 147.9C893.0 152.0 891.2 155.8 889.5 158.8C887.8 161.8 884.9 164.5 884.0 165.6M913.4 100.0C913.3 102.3 912.9 109.1 912.7 113.7C912.5 118.2 912.0 122.6 912.0 127.3C912.0 132.1 912.1 138.7 912.7 142.4C913.3 146.0 914.1 147.6 915.4 149.2C916.8 150.8 918.2 151.5 920.9 152.0C923.6 152.4 928.0 152.2 931.9 152.0C935.7 151.7 940.5 150.7 944.2 150.6C947.8 150.5 951.3 150.6 953.7 151.3C956.1 152.0 957.6 153.3 958.5 154.7C959.4 156.1 959.5 157.9 959.2 159.5C958.9 161.1 958.1 163.1 956.5 164.3C954.9 165.4 952.6 165.9 949.6 166.3C946.7 166.8 942.8 166.9 938.7 167.0C934.6 167.1 929.1 167.0 925.0 167.0C920.9 167.0 916.9 166.7 914.1 167.0C911.2 167.3 909.4 167.8 907.9 169.0C906.4 170.3 905.5 172.1 905.2 174.5C904.9 176.9 905.4 180.3 905.9 183.4C906.3 186.5 907.2 189.9 907.9 193.0C908.6 196.0 909.6 200.4 910.0 201.9M884.0 186.1C884.9 186.0 887.9 185.2 889.5 185.5C891.1 185.7 892.7 186.0 893.6 187.5C894.5 189.0 894.7 191.9 894.9 194.3C895.2 196.7 894.9 200.6 894.9 201.9M0.0 28.9C1.3 29.2 5.2 30.6 7.8 30.5C10.4 30.3 13.3 29.8 15.6 28.1C18.0 26.4 20.1 23.4 21.9 20.3C23.7 17.2 25.4 11.7 26.6 9.4C27.7 7.0 28.3 6.0 28.9 6.2C29.6 6.5 30.5 8.3 30.5 10.9C30.5 13.5 29.8 18.5 28.9 21.9C28.0 25.3 26.7 28.6 25.0 31.2C23.3 33.9 21.4 36.2 18.8 37.5C16.1 38.8 12.5 38.9 9.4 39.1C6.2 39.2 1.6 38.4 0.0 38.3M39.1 120.0C41.1 118.8 47.9 115.6 51.6 112.5C55.2 109.4 58.3 104.2 60.9 101.6C63.5 99.0 64.3 97.8 67.2 96.9C70.1 96.0 76.3 96.2 78.1 96.1M38.3 120.0C37.5 121.0 34.5 123.1 33.6 126.2C32.7 129.4 32.6 134.6 32.8 138.8C33.1 142.9 34.4 147.1 35.2 151.2C35.9 155.4 37.2 159.6 37.5 163.8C37.8 167.9 37.8 172.9 36.7 176.2C35.7 179.6 33.7 182.0 31.2 184.1C28.8 186.1 24.6 187.2 21.9 188.8C19.1 190.3 16.3 191.6 14.8 193.4C13.4 195.3 13.2 196.8 13.3 199.7C13.4 202.6 14.5 207.0 15.6 210.6C16.8 214.3 18.8 217.9 20.3 221.6C21.9 225.2 23.7 229.4 25.0 232.5C26.3 235.6 27.6 238.8 28.1 240.0M71.1 120.0C69.7 121.0 65.5 124.7 62.5 126.2C59.5 127.8 55.3 128.1 53.1 129.4C50.9 130.7 49.7 132.2 49.2 134.1C48.7 135.9 49.1 138.2 50.0 140.3C50.9 142.4 52.9 144.9 54.7 146.6C56.5 148.3 59.9 149.8 60.9 150.5M48.4 184.1C47.4 185.4 44.5 189.3 42.2 191.9C39.8 194.5 36.1 197.3 34.4 199.7C32.7 202.0 32.2 203.6 32.0 205.9C31.9 208.3 32.7 210.9 33.6 213.8C34.5 216.6 36.1 220.0 37.5 223.1C38.9 226.2 40.9 229.7 42.2 232.5C43.5 235.3 44.8 238.8 45.3 240.0M28.9 240.0C30.3 242.1 34.5 249.4 37.5 252.5C40.5 255.6 44.1 257.3 46.9 258.8C49.6 260.2 52.6 261.9 53.9 261.1C55.2 260.3 55.3 257.1 54.7 254.1C54.0 251.1 51.3 245.5 50.0 243.1C48.7 240.8 47.4 240.5 46.9 240.0M0.0 349.4C0.5 348.3 1.8 344.4 3.1 343.1C4.4 341.8 5.7 341.0 7.8 341.6C9.9 342.1 13.0 344.7 15.6 346.2C18.2 347.8 20.3 350.2 23.4 350.9C26.6 351.7 31.2 351.2 34.4 350.9C37.5 350.7 40.1 348.9 42.2 349.4C44.3 349.9 45.8 352.3 46.9 354.1C47.9 355.8 48.2 359.0 48.4 360.0M78.9 336.9C78.3 337.9 76.4 340.5 75.0 343.1C73.6 345.7 71.6 349.7 70.3 352.5C69.0 355.3 67.7 358.8 67.2 360.0M46.9 360.0C47.1 361.0 47.4 364.3 48.4 366.2C49.5 368.2 51.3 371.1 53.1 371.7C54.9 372.4 57.6 371.3 59.4 370.2C61.2 369.0 62.8 366.4 64.1 364.7C65.4 363.0 66.7 360.8 67.2 360.0M78.9 368.6C77.5 369.8 73.0 372.6 70.3 375.6C67.6 378.6 64.8 382.4 62.5 386.6C60.2 390.7 58.1 395.7 56.2 400.6C54.4 405.6 53.0 411.0 51.6 416.2C50.1 421.5 48.8 427.4 47.7 431.9C46.5 436.3 45.6 440.7 44.5 442.8C43.5 444.9 42.2 445.7 41.4 444.4C40.6 443.1 40.2 439.2 39.8 435.0C39.5 430.8 39.3 424.8 39.1 419.4C38.8 413.9 38.7 407.1 38.3 402.2C37.9 397.2 37.8 392.6 36.7 389.7C35.7 386.8 33.9 385.5 32.0 385.0C30.2 384.5 28.0 385.0 25.8 386.6C23.6 388.1 21.2 391.9 18.8 394.4C16.3 396.8 13.3 400.2 10.9 401.4C8.6 402.6 6.5 401.9 4.7 401.4C2.9 400.9 0.8 398.8 0.0 398.3M238.6 557.1C237.1 557.5 233.5 558.7 230.1 559.6C226.6 560.4 221.8 562.0 218.0 562.0C214.1 562.0 209.9 561.0 207.1 559.6C204.2 558.1 201.8 556.1 201.0 553.5C200.2 550.9 201.0 547.0 202.2 543.8C203.4 540.6 206.5 537.4 208.3 534.1C210.1 530.9 212.7 526.9 213.1 524.4C213.5 522.0 212.7 519.8 210.7 519.6C208.7 519.4 204.7 521.6 201.0 523.2C197.4 524.8 192.5 528.3 188.9 529.3C185.3 530.3 182.4 530.3 179.2 529.3C176.0 528.3 172.8 525.9 169.5 523.2C166.3 520.6 162.9 516.4 159.8 513.5C156.8 510.7 153.8 507.1 151.4 506.3C148.9 505.5 147.5 506.5 145.3 508.7C143.1 510.9 140.3 515.8 138.0 519.6C135.8 523.4 133.2 528.1 132.0 531.7C130.8 535.3 130.2 539.4 130.8 541.4C131.4 543.4 133.6 544.6 135.6 543.8C137.6 543.0 140.5 539.2 142.9 536.5C145.3 533.9 147.9 529.5 150.2 528.1C152.4 526.7 154.2 526.7 156.2 528.1C158.2 529.5 160.0 534.1 162.3 536.5C164.5 539.0 166.7 542.0 169.5 542.6C172.4 543.2 176.4 541.0 179.2 540.2C182.0 539.4 185.1 537.4 186.5 537.8C187.9 538.2 187.9 540.0 187.7 542.6C187.5 545.2 185.7 550.1 185.3 553.5C184.9 556.9 184.3 560.4 185.3 563.2C186.3 566.0 188.3 568.6 191.3 570.5C194.4 572.3 199.0 573.3 203.4 574.1C207.9 574.9 212.1 575.3 218.0 575.3C223.8 575.3 235.1 574.3 238.6 574.1M238.6 699.3C237.5 700.5 234.1 703.3 232.5 706.6C230.9 709.8 229.1 714.6 228.9 718.7C228.7 722.7 229.7 728.4 231.3 730.8C232.9 733.2 237.3 732.8 238.6 733.2"/><path stroke="#2b8cc2" d="M1024.8 152.6C1023.2 153.2 1018.2 154.6 1015.3 156.1C1012.3 157.5 1009.1 159.2 1007.1 161.5C1005.0 163.8 1003.6 166.8 1002.9 169.7C1002.3 172.7 1002.4 176.3 1002.9 179.3C1003.5 182.3 1004.8 185.9 1006.4 187.5C1008.0 189.1 1010.6 189.3 1012.5 188.9C1014.5 188.4 1016.5 186.6 1018.0 184.8C1019.5 182.9 1020.3 179.6 1021.4 177.9C1022.5 176.2 1024.3 175.1 1024.8 174.5M269.0 13.0C269.2 10.7 269.8 1.3 270.0 -1.0M285.0 13.0C284.8 11.7 284.4 7.3 283.7 5.0C283.0 2.7 281.4 0.0 281.0 -1.0M340.0 13.0C339.3 11.8 336.3 8.3 336.0 6.0C335.7 3.7 337.7 0.2 338.0 -1.0M366.0 13.0C367.0 11.7 369.8 7.3 372.0 5.0C374.2 2.7 377.8 0.0 379.0 -1.0M385.0 13.0C385.2 10.7 385.8 1.3 386.0 -1.0M675.7 -1.0C677.4 0.3 681.3 4.5 685.7 6.6C690.1 8.7 697.0 10.5 702.0 11.6C707.0 12.7 713.3 12.8 715.6 13.0"/><path stroke="#31507f" d="M0.0 195.0C1.0 197.1 3.9 203.3 6.2 207.5C8.6 211.7 11.5 215.8 14.1 220.0C16.7 224.2 19.8 229.2 21.9 232.5C24.0 235.8 25.8 238.8 26.6 240.0M15.6 255.6C15.9 257.4 16.1 263.7 17.2 266.6C18.2 269.4 20.2 272.0 21.9 272.8C23.6 273.6 26.0 272.8 27.3 271.2C28.6 269.7 29.6 267.1 29.7 263.4C29.8 259.8 28.8 253.3 28.1 249.4C27.5 245.5 26.2 241.6 25.8 240.0M7.8 360.0C8.6 361.3 11.2 364.9 12.5 367.8C13.8 370.7 15.6 374.6 15.6 377.2C15.6 379.8 14.3 382.1 12.5 383.4C10.7 384.7 6.8 384.9 4.7 385.0C2.6 385.1 0.8 384.3 0.0 384.2M14.5 735.6C14.7 732.4 14.9 722.7 15.7 716.3C16.5 709.8 18.2 702.9 19.4 696.9C20.6 690.8 21.8 683.2 23.0 679.9C24.2 676.7 24.4 675.9 26.6 677.5C28.9 679.1 32.7 686.6 36.3 689.6C40.0 692.6 44.8 695.3 48.4 695.7C52.1 696.1 55.5 694.3 58.1 692.0C60.7 689.8 63.2 686.0 64.2 682.3C65.2 678.7 65.0 674.7 64.2 670.2C63.4 665.8 60.3 660.5 59.3 655.7C58.3 650.9 57.7 645.0 58.1 641.2C58.5 637.3 59.7 634.3 61.8 632.7C63.8 631.1 66.8 631.3 70.2 631.5C73.7 631.7 78.7 634.7 82.3 633.9C86.0 633.1 88.8 628.3 92.0 626.6C95.3 625.0 98.9 624.0 101.7 624.2C104.5 624.4 107.2 625.4 109.0 627.9C110.8 630.3 111.4 634.1 112.6 638.8C113.8 643.4 114.4 651.3 116.3 655.7C118.1 660.1 120.3 663.4 123.5 665.4C126.7 667.4 131.2 668.2 135.6 667.8C140.1 667.4 145.3 665.4 150.2 663.0C155.0 660.5 160.2 656.3 164.7 653.3C169.1 650.3 174.2 645.6 176.8 644.8C179.4 644.0 180.0 645.4 180.4 648.4C180.8 651.5 180.2 657.3 179.2 663.0C178.2 668.6 175.8 675.9 174.4 682.3C173.0 688.8 172.0 695.7 170.7 701.7C169.5 707.8 168.9 714.4 167.1 718.7C165.3 722.9 162.3 726.3 159.8 727.1C157.4 728.0 154.6 726.5 152.6 723.5C150.6 720.5 149.4 714.2 147.7 709.0C146.1 703.7 144.7 696.9 142.9 692.0C141.1 687.2 139.7 682.7 136.8 679.9C134.0 677.1 129.8 676.1 125.9 675.1C122.1 674.1 116.7 673.1 113.8 673.9C111.0 674.7 109.8 676.1 109.0 679.9C108.2 683.8 108.8 690.8 109.0 696.9C109.2 702.9 109.8 709.8 110.2 716.3C110.6 722.7 111.2 732.4 111.4 735.6M26.6 735.6C27.4 732.8 28.7 723.1 31.5 718.7C34.3 714.2 39.2 711.8 43.6 709.0C48.0 706.2 53.7 703.7 58.1 701.7C62.6 699.7 67.0 699.7 70.2 696.9C73.5 694.1 75.7 690.0 77.5 684.8C79.3 679.5 79.9 670.0 81.1 665.4C82.3 660.7 83.4 657.9 84.8 656.9C86.2 655.9 88.2 656.3 89.6 659.3C91.0 662.4 92.2 668.8 93.2 675.1C94.3 681.3 94.9 690.0 95.7 696.9C96.5 703.7 97.3 709.8 98.1 716.3C98.9 722.7 100.1 732.4 100.5 735.6"/></svg>
<svg style="left:48px;top:33px" width="48" height="32" viewBox="0 0 48 32"><defs><linearGradient id="hdb" x1="0" y1="0" x2="1" y2="1"><stop offset="0" stop-color="#f2f2f2"/><stop offset="1" stop-color="#cfcfcf"/></linearGradient><linearGradient id="hdf" x1="0" y1="0" x2="1" y2="0"><stop offset="0" stop-color="#8a8a8a"/><stop offset=".15" stop-color="#1e1e1e"/><stop offset="1" stop-color="#8c8c8c"/></linearGradient></defs><path d="M7.5 0.5 H40.5 L47.5 26 H0.5 Z" fill="url(#hdb)" stroke="#e8e8e8" stroke-width="1"/><ellipse cx="24" cy="14" rx="15" ry="10.5" fill="#e4e4e4" stroke="#c9c9c9"/><ellipse cx="24" cy="14" rx="5" ry="3.4" fill="#d2d2d2" stroke="#bdbdbd"/><rect x="0.5" y="26" width="47" height="5.5" fill="url(#hdf)"/></svg>
<span class="t f" style="left:32.30px;top:75.75px;font-size:14px;line-height:18px;height:18px;color:#fff;letter-spacing:0.158px;text-shadow:0 1px 1px rgba(0,0,0,.7);">File System</span>
<svg style="left:48px;top:150px" width="49" height="37" viewBox="0 0 49 37"><defs><linearGradient id="fh" x1="0" y1="0" x2="0" y2="1"><stop offset="0" stop-color="#f5dfb5"/><stop offset="1" stop-color="#dcb77c"/></linearGradient></defs><path d="M3 7.5 V2.6 Q3 1 4.6 1 H18 Q19.6 1 19.6 2.6 V7.5 Z" fill="#f6f3ec"/><rect x="0.5" y="7.5" width="48" height="28.5" rx="2" fill="url(#fh)" stroke="#c9a469"/><path d="M14 25 L21 18 L28 25 H26 V30 H16 V25 Z" fill="#b88d4f"/></svg>
<span class="t f" style="left:49.50px;top:194.75px;font-size:14px;line-height:18px;height:18px;color:#fff;letter-spacing:0.214px;text-shadow:0 1px 1px rgba(0,0,0,.7);">Home</span>
<svg style="left:48px;top:264px" width="48" height="42" viewBox="0 0 48 42"><rect x="0.5" y="0.8" width="47" height="31" rx="1.5" fill="#e6ecf0" stroke="#c3ccd2"/><rect x="3.4" y="3.8" width="42" height="24.6" fill="#1fa5e0"/><rect x="5.5" y="6" width="37.5" height="20" fill="none" stroke="#fff" stroke-width="1" stroke-dasharray="1.4 1.4"/><path d="M17.6 10 L25.6 21 M26.4 10 L18.4 21" stroke="#17303d" stroke-width="1.7"/><circle cx="17.6" cy="22.6" r="2.1" fill="none" stroke="#17303d" stroke-width="1.4"/><circle cx="26.4" cy="22.6" r="2.1" fill="none" stroke="#17303d" stroke-width="1.4"/><path d="M15.5 32 H30.5 V39.5 Q30.5 41.6 28.5 41.6 H17 Q15 41.6 15 39.5 Z" fill="#dfe5e9"/></svg>
<span class="t f" style="left:34.00px;top:313.75px;font-size:14px;line-height:18px;height:18px;color:#fff;letter-spacing:0.130px;text-shadow:0 1px 1px rgba(0,0,0,.7);">Screenshot</span>
<div style="left:80px;top:12px;width:665px;height:468px;background:#f6f5f4;border-radius:5px 5px 0 0;"></div>
<svg style="left:84.5px;top:17px" width="21" height="19.5" viewBox="0 0 21 19.5"><rect x="0" y="0" width="21" height="19.5" fill="#b4c0c8"/><rect x="1.6" y="1.6" width="17.8" height="16.3" fill="#22343d"/><path d="M4.2 4.9 L9.2 8.2 L4.2 11.7" fill="none" stroke="#fff" stroke-width="1.7"/><rect x="10.5" y="13.3" width="6.3" height="1.8" fill="#fff"/></svg>
<span class="t f" style="left:282.50px;top:17.95px;font-size:14px;line-height:18px;height:18px;color:#8c8c8c;font-weight:700;letter-spacing:-0.056px;">Terminal - root@sysrescue:~</span>
<svg style="left:0;top:0" width="1024" height="768" viewBox="0 0 1024 768"><path d="M727 24 L734 31 M734 24 L727 31" stroke="#8e8e8e" stroke-width="2.2" fill="none"/><rect x="704" y="24" width="7" height="7" stroke="#8e8e8e" stroke-width="1.8" fill="none"/><rect x="680" y="30" width="9" height="2" fill="#8e8e8e"/><path d="M658 30.5 L661.5 26.5 L665 30.5" stroke="#8e8e8e" stroke-width="2.2" fill="none"/></svg>
<span class="t f" style="left:92.50px;top:43.95px;font-size:14px;line-height:18px;height:18px;color:#929595;letter-spacing:-0.221px;">File</span>
<span class="t f" style="left:131.50px;top:43.95px;font-size:14px;line-height:18px;height:18px;color:#929595;letter-spacing:0.225px;">Edit</span>
<span class="t f" style="left:172.80px;top:43.95px;font-size:14px;line-height:18px;height:18px;color:#929595;">View</span>
<span class="t f" style="left:220.70px;top:43.95px;font-size:14px;line-height:18px;height:18px;color:#929595;letter-spacing:0.199px;">Terminal</span>
<span class="t f" style="left:292.70px;top:43.95px;font-size:14px;line-height:18px;height:18px;color:#929595;letter-spacing:-0.759px;">Tabs</span>
<span class="t f" style="left:337.70px;top:43.95px;font-size:14px;line-height:18px;height:18px;color:#929595;letter-spacing:0.068px;">Help</span>
<div style="left:84px;top:66px;width:642px;height:410px;background:#000;"></div>
<div style="left:726px;top:66px;width:15px;height:410px;background:#efeeed;border-left:1px solid #e3e2e0;"></div>
<svg style="left:0;top:0" width="0" height="0"><defs><pattern id="star" x="85" y="0" width="8" height="17" patternUnits="userSpaceOnUse"><path d="M4 4.7V10.9 M1.25 6.2L6.75 9.4 M6.75 6.2L1.25 9.4" stroke="#e8e8e8" stroke-width="1.05" fill="none"/></pattern></defs></svg>
<svg style="left:85px;top:66px" width="424" height="17" viewBox="85 0 424 17"><rect x="85" y="0" width="424" height="17" fill="url(#star)"/></svg>
<span class="t m" style="left:509.00px;top:67.98px;font-size:13.6px;line-height:18px;height:18px;color:#fdfdfd;">.</span>
<span class="t m" style="left:85.00px;top:84.98px;font-size:13.6px;line-height:18px;height:18px;color:#fdfdfd;letter-spacing:-0.16px;">Device /dev/sdb1 is not a FAT partition.</span>
<span class="t m" style="left:85.00px;top:101.98px;font-size:13.6px;line-height:18px;height:18px;color:#fdfdfd;letter-spacing:-0.16px;">Skip updating syslinux on that.</span>
<span class="t m" style="left:85.00px;top:118.98px;font-size:13.6px;line-height:18px;height:18px;color:#fdfdfd;letter-spacing:-0.16px;">Device /dev/sdb2 is not a FAT partition.</span>
<span class="t m" style="left:85.00px;top:135.98px;font-size:13.6px;line-height:18px;height:18px;color:#fdfdfd;letter-spacing:-0.16px;">Skip updating syslinux on that.</span>
<span class="t m" style="left:85.00px;top:152.98px;font-size:13.6px;line-height:18px;height:18px;color:#fdfdfd;letter-spacing:-0.16px;">Device /dev/sdb3 is not a FAT partition.</span>
<span class="t m" style="left:85.00px;top:169.98px;font-size:13.6px;line-height:18px;height:18px;color:#fdfdfd;letter-spacing:-0.16px;">Skip updating syslinux on that.</span>
<svg style="left:85px;top:185px" width="424" height="17" viewBox="85 0 424 17"><rect x="85" y="0" width="424" height="17" fill="url(#star)"/></svg>
<span class="t m" style="left:509.00px;top:186.98px;font-size:13.6px;line-height:18px;height:18px;color:#fdfdfd;">.</span>
<span class="t m" style="left:85.00px;top:203.98px;font-size:13.6px;line-height:18px;height:18px;color:#fdfdfd;letter-spacing:-0.16px;">Running: ocs-install-grub -p &quot;sdb1</span>
<span class="t m" style="left:85.00px;top:220.98px;font-size:13.6px;line-height:18px;height:18px;color:#fdfdfd;letter-spacing:-0.16px;">egrep: warning: egrep is obsolescent</span>
<span class="t m" style="left:85.00px;top:237.98px;font-size:13.6px;line-height:18px;height:18px;color:#fdfdfd;letter-spacing:-0.16px;">The grub directory is NOT found (/bo</span>
<span class="t m" style="left:85.00px;top:254.98px;font-size:13.6px;line-height:18px;height:18px;color:#fdfdfd;letter-spacing:-0.16px;">exists) or the file system does not</span>
<span class="t m" style="left:85.00px;top:271.98px;font-size:13.6px;line-height:18px;height:18px;color:#fdfdfd;letter-spacing:-0.16px;">tall.</span>
<svg style="left:85px;top:287px" width="424" height="17" viewBox="85 0 424 17"><rect x="85" y="0" width="424" height="17" fill="url(#star)"/></svg>
<span class="t m" style="left:509.00px;top:288.98px;font-size:13.6px;line-height:18px;height:18px;color:#fdfdfd;">.</span>
<span class="t m" style="left:85.00px;top:305.98px;font-size:13.6px;line-height:18px;height:18px;color:#fdfdfd;letter-spacing:-0.16px;">Try to run partclone.ntfsfixboot for</span>
<span class="t m" style="left:85.00px;top:322.98px;font-size:13.6px;line-height:18px;height:18px;color:#fdfdfd;letter-spacing:-0.16px;">partition(s):  sdb1 sdb3</span>
<span class="t m" style="left:85.00px;top:339.98px;font-size:13.6px;line-height:18px;height:18px;color:#fdfdfd;letter-spacing:-0.16px;">The NTFS boot partition was not foun</span>
<span class="t m" style="left:85.00px;top:356.98px;font-size:13.6px;line-height:18px;height:18px;color:#fdfdfd;letter-spacing:-0.16px;">ip running partclone.ntfsfixboot.</span>
<svg style="left:85px;top:372px" width="424" height="17" viewBox="85 0 424 17"><rect x="85" y="0" width="424" height="17" fill="url(#star)"/></svg>
<span class="t m" style="left:509.00px;top:373.98px;font-size:13.6px;line-height:18px;height:18px;color:#fdfdfd;">.</span>
<span class="t m" style="left:85.00px;top:390.98px;font-size:13.6px;line-height:18px;height:18px;color:#fdfdfd;letter-spacing:-0.16px;">Checking if udevd rules have to be r</span>
<span class="t m" style="left:85.00px;top:407.98px;font-size:13.6px;line-height:18px;height:18px;color:#fdfdfd;letter-spacing:-0.16px;">Now syncing - flush filesystem buffe</span>
<span class="t m" style="left:85.00px;top:424.98px;font-size:13.6px;line-height:18px;height:18px;color:#fdfdfd;letter-spacing:-0.16px;">Ending /usr/bin/ocs</span>
<span class="t m" style="left:85.00px;top:441.98px;font-size:13.6px;line-height:18px;height:18px;color:#fdfdfd;letter-spacing:-0.16px;">Press &quot;Enter&quot; to continue......</span>
<span class="t m" style="left:85.00px;top:458.98px;font-size:13.6px;line-height:18px;height:18px;color:#5c5cff;font-weight:700;letter-spacing:-0.16px;">[root@sysrescue ~]#</span>
<div style="left:240px;top:201px;width:783px;height:533px;background:#f6f5f4;border-radius:5px 5px 0 0;"></div>
<svg style="left:245px;top:208.5px" width="20" height="15.5" viewBox="0 0 20 15.5"><path d="M2.6 0.5 H17.4 L19.6 10.2 V13.4 Q19.6 15.1 18 15.1 H2 Q0.4 15.1 0.4 13.4 V10.2 Z" fill="#2b2c2b"/><path d="M3.4 1.4 H16.6 L18.5 10 H1.5 Z" fill="#a3a5a2"/><ellipse cx="10" cy="5.8" rx="7" ry="4.2" fill="#3d3f3d"/><ellipse cx="10" cy="5.8" rx="5.9" ry="3.3" fill="#f3ead9"/><path d="M10 5.8 L4.5 4.6 A5.9 3.3 0 0 1 15.9 5.9 Z" fill="#84c545"/><path d="M10 5.8 L15.9 5.9 A5.9 3.3 0 0 1 11.4 9 Z" fill="#dd6a63"/><rect x="1.3" y="10" width="17.4" height="2.7" fill="#d9dbd8"/><rect x="1.3" y="10" width="3" height="2.7" fill="#f4f5f4"/><rect x="9" y="13.3" width="5" height="1" fill="#3f8f6d"/></svg>
<span class="t f" style="left:534.00px;top:206.95px;font-size:14px;line-height:18px;height:18px;color:#8c8c8c;font-weight:700;letter-spacing:0.088px;">/dev/sdb - GParted</span>
<svg style="left:0;top:0" width="1024" height="768" viewBox="0 0 1024 768"><path d="M1005 213 L1012 220 M1012 213 L1005 220" stroke="#8e8e8e" stroke-width="2.2" fill="none"/><rect x="982" y="213" width="7" height="7" stroke="#8e8e8e" stroke-width="1.8" fill="none"/><rect x="958" y="219" width="9" height="2" fill="#8e8e8e"/><path d="M936 219.5 L939.5 215.5 L943 219.5" stroke="#8e8e8e" stroke-width="2.2" fill="none"/></svg>
<span class="t f" style="left:252.30px;top:232.95px;font-size:14px;line-height:18px;height:18px;color:#929595;letter-spacing:-0.307px;">GParted</span>
<span class="t f" style="left:319.00px;top:232.95px;font-size:14px;line-height:18px;height:18px;color:#929595;letter-spacing:0.292px;">Edit</span>
<span class="t f" style="left:360.00px;top:232.95px;font-size:14px;line-height:18px;height:18px;color:#929595;letter-spacing:0.302px;">View</span>
<span class="t f" style="left:408.80px;top:232.95px;font-size:14px;line-height:18px;height:18px;color:#929595;letter-spacing:0.161px;">Device</span>
<span class="t f" style="left:469.00px;top:232.95px;font-size:14px;line-height:18px;height:18px;color:#929595;letter-spacing:0.293px;">Partition</span>
<span class="t f" style="left:539.70px;top:232.95px;font-size:14px;line-height:18px;height:18px;color:#929595;letter-spacing:0.268px;">Help</span>
<div style="left:240px;top:255px;width:783px;height:1px;background:#dedcd9;"></div>
<div style="left:340px;top:258px;width:1px;height:37px;background:#e6e4e1;"></div>
<div style="left:398px;top:258px;width:1px;height:37px;background:#e6e4e1;"></div>
<div style="left:497px;top:258px;width:1px;height:37px;background:#e6e4e1;"></div>
<svg style="left:258px;top:263px" width="26" height="27" viewBox="0 0 26 27"><defs><linearGradient id="np" x1="0" y1="0" x2="1" y2="1"><stop offset="0" stop-color="#f6f6f5"/><stop offset="1" stop-color="#e6e6e5"/></linearGradient></defs><rect x="2.5" y="2.5" width="17" height="22" fill="url(#np)" stroke="#cfcfce" stroke-dasharray="1.2 0.8"/><path d="M15.6 14.6 H19.4 V17.9 H23 V21.7 H19.4 V24.9 H15.6 V21.7 H12.3 V17.9 H15.6 Z" fill="#badea2" stroke="#96c878" stroke-width=".8"/></svg>
<svg style="left:302px;top:264px" width="19" height="24" viewBox="0 0 19 24"><defs><linearGradient id="tr" x1="0" x2="1"><stop offset="0" stop-color="#8f918e"/><stop offset=".4" stop-color="#dededd"/><stop offset=".7" stop-color="#b9bab8"/><stop offset="1" stop-color="#8b8d8a"/></linearGradient></defs><path d="M2 6 L3 21 Q9.5 24.4 16 21 L17 6 Z" fill="url(#tr)" stroke="#858784" stroke-width=".8"/><ellipse cx="9.5" cy="5.2" rx="8.6" ry="3.6" fill="#cfd0ce" stroke="#7d7f7c" stroke-width=".9"/><path d="M6.8 4.2 V1.8 H12.2 V4.2" fill="none" stroke="#8a8c89" stroke-width="1"/><path d="M5.2 9.5 L5.8 20.4 M8 10 L8.3 21.3 M10.8 10 L10.6 21.3 M13.7 9.5 L13.1 20.4" stroke="#8e908d" stroke-width=".8"/></svg>
<svg style="left:358.8px;top:267.6px" width="22.5" height="17" viewBox="0 0 25 19" preserveAspectRatio="none"><defs><linearGradient id="ag" x1="0" y1="0" x2="0" y2="1"><stop offset="0" stop-color="#b2de63"/><stop offset=".5" stop-color="#8fca3a"/><stop offset="1" stop-color="#79b72c"/></linearGradient></defs><path d="M1 6.6 H11.4 V1.4 L20 9.5 L11.4 17.6 V12.4 H1 Z" fill="url(#ag)" stroke="#64a024" stroke-width=".9" stroke-linejoin="round"/><rect x="20.6" y="1.2" width="3.4" height="16.8" rx=".6" fill="url(#ag)" stroke="#64a024" stroke-width=".9"/></svg>
<svg style="left:416px;top:265px" width="20" height="22" viewBox="0 0 20 22"><defs><linearGradient id="cp" x1="0" y1="0" x2="0" y2="1"><stop offset="0" stop-color="#fafafa"/><stop offset="1" stop-color="#dcdcdb"/></linearGradient></defs><rect x="1.5" y="1.5" width="11" height="14.5" fill="url(#cp)" stroke="#a9aba8"/><rect x="7.5" y="6" width="11" height="14.5" fill="url(#cp)" stroke="#8f918e"/></svg>
<svg style="left:459px;top:264px" width="20" height="22" viewBox="0 0 20 22"><rect x="1" y="2.5" width="15" height="18" rx="1.2" fill="#e2c9a3" stroke="#d3b88f"/><rect x="5.5" y="0.8" width="6" height="3.4" rx="1" fill="#d5d5d3" stroke="#b9b9b7" stroke-width=".7"/><rect x="7.5" y="6" width="11" height="15" fill="#f1f1f0" stroke="#c9c9c7"/></svg>
<svg style="left:515px;top:266px" width="21" height="18" viewBox="0 0 21 18"><path d="M1 8 L9 1.2 V5.5 Q18 5 19.6 17 Q15.5 10.5 9 11.3 V15.5 Z" fill="#f7dc8b" stroke="#edd07a" stroke-width=".8" stroke-linejoin="round"/></svg>
<svg style="left:558px;top:265px" width="20" height="19" viewBox="0 0 20 19"><path d="M1.2 10 L4.8 7.6 L7.6 11.6 L15.8 1 L19 3 L8 18 Z" fill="#b5e08f" stroke="#9fd177" stroke-width=".9" stroke-linejoin="round"/></svg>
<div style="left:815px;top:256px;width:204px;height:41px;border:1px solid #dad6d2;border-radius:5px;background:#f6f5f4;"></div>
<svg style="left:825px;top:264px" width="24" height="23" viewBox="0 0 24 23"><defs><linearGradient id="hs" x1="0" y1="0" x2="1" y2="1"><stop offset="0" stop-color="#ececec"/><stop offset="1" stop-color="#c4c4c4"/></linearGradient></defs><path d="M3.5 0.7 H20.5 L23.3 18 H0.7 Z" fill="url(#hs)" stroke="#9b9b9b" stroke-width=".8"/><ellipse cx="12" cy="9.3" rx="8" ry="6.4" fill="#e3e3e3" stroke="#c2c2c2" stroke-width=".8"/><ellipse cx="12" cy="9.3" rx="2.6" ry="2" fill="#d0d0d0"/><path d="M0.7 18 H23.3 V21.2 Q23.3 22.4 22 22.4 H2 Q0.7 22.4 0.7 21.2 Z" fill="#5a5a5a"/><rect x="2.6" y="19.6" width="5" height="1" fill="#bdbdbd"/></svg>
<span class="t f" style="left:850.80px;top:266.55px;font-size:14px;line-height:18px;height:18px;color:#8e9192;letter-spacing:0.191px;">/dev/sdb (223.57 GiB)</span>
<svg style="left:995px;top:274px" width="11" height="6" viewBox="0 0 11 6"><path d="M0.3 0 L10.7 0 L5.5 5.6 Z" fill="#949796"/></svg>
<div style="left:249px;top:302px;width:11px;height:70px;background:#fbfde0;border:4px solid #6bcfb0;"></div>
<div style="left:264px;top:302px;width:93px;height:70px;background:linear-gradient(to right,#f7f7b0 0,#f7f7b0 39.5px,#fff 39.5px);border:4px solid #6bcfb0;"></div>
<span class="t f" style="left:279.00px;top:319.55px;font-size:14px;line-height:18px;height:18px;color:#111;letter-spacing:0.223px;">/dev/sdb2</span>
<span class="t f" style="left:279.50px;top:336.75px;font-size:14px;line-height:18px;height:18px;color:#111;letter-spacing:-0.033px;">28.54 GiB</span>
<div style="left:361px;top:302px;width:270px;height:70px;background:#a9a9a9;"></div>
<span class="t f" style="left:458.00px;top:318.75px;font-size:14px;line-height:18px;height:18px;color:#111;letter-spacing:0.388px;">unallocated</span>
<div style="left:631px;top:302px;width:18.5px;height:70px;background:#e6fbf4;"></div>
<svg style="left:635px;top:302px" width="10" height="70" viewBox="0 0 10 70"><rect x="0" y="0" width="10" height="70" fill="#5fcf8c"/><rect x="3.6" y="3" width="2.2" height="67" fill="#aeeaa0"/><rect x="0.9" y="6" width="1.9" height="4" fill="#f9f3c7"/><rect x="6.9" y="4" width="1.9" height="4" fill="#f9f3c7"/><rect x="0.9" y="14" width="1.9" height="4" fill="#f9f3c7"/><rect x="6.9" y="12" width="1.9" height="4" fill="#f9f3c7"/><rect x="0.9" y="22" width="1.9" height="4" fill="#f9f3c7"/><rect x="6.9" y="20" width="1.9" height="4" fill="#f9f3c7"/><rect x="0.9" y="30" width="1.9" height="4" fill="#f9f3c7"/><rect x="6.9" y="28" width="1.9" height="4" fill="#f9f3c7"/><rect x="0.9" y="38" width="1.9" height="4" fill="#f9f3c7"/><rect x="6.9" y="36" width="1.9" height="4" fill="#f9f3c7"/><rect x="0.9" y="46" width="1.9" height="4" fill="#f9f3c7"/><rect x="6.9" y="44" width="1.9" height="4" fill="#f9f3c7"/><rect x="0.9" y="54" width="1.9" height="4" fill="#f9f3c7"/><rect x="6.9" y="52" width="1.9" height="4" fill="#f9f3c7"/><rect x="0.9" y="62" width="1.9" height="4" fill="#f9f3c7"/><rect x="6.9" y="60" width="1.9" height="4" fill="#f9f3c7"/></svg>
<div style="left:650px;top:302px;width:364px;height:70px;background:#a9a9a9;"></div>
<span class="t f" style="left:793.00px;top:318.75px;font-size:14px;line-height:18px;height:18px;color:#111;letter-spacing:0.388px;">unallocated</span>
<div style="left:244px;top:377px;width:775px;height:316px;background:#fcfcfc;border:1px solid #d5d1cd;"></div>
<div style="left:245px;top:400px;width:773px;height:1px;background:#f0efee;"></div>
<span class="t f" style="left:251.50px;top:380.45px;font-size:14px;line-height:18px;height:18px;color:#bdbebd;font-weight:700;letter-spacing:0.890px;">Partition</span>
<span class="t f" style="left:934.60px;top:380.45px;font-size:14px;line-height:18px;height:18px;color:#bdbebd;font-weight:700;letter-spacing:0.755px;">Flags</span>
<div style="left:353.5px;top:384px;width:1px;height:13px;background:#a5a5a5;"></div>
<div style="left:245px;top:472px;width:773px;height:23px;background:#3584e4;"></div>
<span class="t f" style="left:267.00px;top:404.85px;font-size:14px;line-height:18px;height:18px;color:#2e3436;letter-spacing:0.235px;">/dev/sdb1</span>
<div style="left:350px;top:405.9px;width:16px;height:15.6px;background:#6bcfb0;"></div>
<span class="t f" style="left:267.00px;top:427.85px;font-size:14px;line-height:18px;height:18px;color:#2e3436;letter-spacing:0.235px;">/dev/sdb2</span>
<div style="left:350px;top:428.9px;width:16px;height:15.6px;background:#6bcfb0;"></div>
<span class="t f" style="left:267.00px;top:450.85px;font-size:14px;line-height:18px;height:18px;color:#2e3436;letter-spacing:0.398px;">unallocated</span>
<div style="left:350px;top:451.9px;width:16px;height:15.6px;background:#a9a9a9;"></div>
<span class="t f" style="left:267.00px;top:473.85px;font-size:14px;line-height:18px;height:18px;color:#fff;letter-spacing:0.235px;">/dev/sdb3</span>
<div style="left:350px;top:474.9px;width:16px;height:15.6px;background:#6bcfb0;"></div>
<span class="t f" style="left:267.00px;top:496.85px;font-size:14px;line-height:18px;height:18px;color:#2e3436;letter-spacing:0.398px;">unallocated</span>
<div style="left:350px;top:497.9px;width:16px;height:15.6px;background:#a9a9a9;"></div>
<span class="t f" style="left:897.00px;top:404.85px;font-size:14px;line-height:18px;height:18px;color:#2e3436;letter-spacing:-0.183px;">boot</span>
<span class="t f" style="left:898.00px;top:473.85px;font-size:14px;line-height:18px;height:18px;color:#fff;letter-spacing:-0.065px;">msftres</span>
<span class="t f" style="left:258.50px;top:702.45px;font-size:14px;line-height:18px;height:18px;color:#8b8e8f;letter-spacing:0.275px;">0 operations pending</span>
<div style="left:355px;top:336px;width:562px;height:322px;background:#f6f5f4;border-radius:6px 6px 3px 3px;border:1px solid #7e7c7a;border-top-color:#6a6967;box-shadow:0 5px 14px rgba(0,0,0,.30);"></div>
<div style="left:356px;top:337px;width:560px;height:28px;background:#dad6d2;border-radius:5px 5px 0 0;"></div>
<svg style="left:361px;top:344px" width="20" height="15.5" viewBox="0 0 20 15.5"><path d="M2.6 0.5 H17.4 L19.6 10.2 V13.4 Q19.6 15.1 18 15.1 H2 Q0.4 15.1 0.4 13.4 V10.2 Z" fill="#2b2c2b"/><path d="M3.4 1.4 H16.6 L18.5 10 H1.5 Z" fill="#a3a5a2"/><ellipse cx="10" cy="5.8" rx="7" ry="4.2" fill="#3d3f3d"/><ellipse cx="10" cy="5.8" rx="5.9" ry="3.3" fill="#f3ead9"/><path d="M10 5.8 L4.5 4.6 A5.9 3.3 0 0 1 15.9 5.9 Z" fill="#84c545"/><path d="M10 5.8 L15.9 5.9 A5.9 3.3 0 0 1 11.4 9 Z" fill="#dd6a63"/><rect x="1.3" y="10" width="17.4" height="2.7" fill="#d9dbd8"/><rect x="1.3" y="10" width="3" height="2.7" fill="#f4f5f4"/><rect x="9" y="13.3" width="5" height="1" fill="#3f8f6d"/></svg>
<span class="t f" style="left:549.50px;top:341.75px;font-size:14px;line-height:18px;height:18px;color:#2d2d2d;font-weight:700;letter-spacing:-0.021px;">Resize/Move /dev/sdb3</span>
<svg style="left:0;top:0" width="1024" height="768" viewBox="0 0 1024 768"><path d="M898 348 L905 355 M905 348 L898 355" stroke="#2e2e2e" stroke-width="2.2" fill="none"/><path d="M875 354.5 L878.5 350.5 L882 354.5" stroke="#2e2e2e" stroke-width="2.2" fill="none"/></svg>
<div style="left:367px;top:372px;width:538px;height:52px;background:#a9a9a9;"></div>
<div style="left:367px;top:372px;width:11px;height:52px;background:#d3d3d3;"></div>
<div style="left:894px;top:372px;width:11px;height:52px;background:#c9c9c9;"></div>
<div style="left:877px;top:372px;width:17px;height:52px;background:#6bcfb0;"></div>
<div style="left:867px;top:378px;width:10.5px;height:41px;border:1px solid #e9e9e9;border-right:none;"></div>
<div style="left:885px;top:381px;width:1px;height:35px;background:#f4f7c8;"></div>
<svg style="left:860px;top:380px" width="50" height="36" viewBox="0 0 50 36"><path d="M7.5 18 L17 8 L17 28 Z M44.3 18 L34 8 L34 28 Z" fill="#000"/></svg>
<span class="t f" style="left:449.40px;top:428.05px;font-size:14px;line-height:18px;height:18px;color:#2e3436;letter-spacing:0.360px;">Minimum size: 442 MiB</span>
<span class="t f" style="left:641.30px;top:428.05px;font-size:14px;line-height:18px;height:18px;color:#2e3436;letter-spacing:0.359px;">Maximum size: 199657 MiB</span>
<span class="t f" style="left:468.20px;top:462.65px;font-size:14px;line-height:18px;height:18px;color:#2e3436;letter-spacing:0.141px;">Free space preceding (MiB):</span>
<span class="t f" style="left:468.20px;top:501.65px;font-size:14px;line-height:18px;height:18px;color:#2e3436;letter-spacing:0.227px;">New size (MiB):</span>
<span class="t f" style="left:468.20px;top:540.65px;font-size:14px;line-height:18px;height:18px;color:#2e3436;letter-spacing:0.261px;">Free space following (MiB):</span>
<span class="t f" style="left:468.20px;top:579.65px;font-size:14px;line-height:18px;height:18px;color:#2e3436;letter-spacing:0.338px;">Align to:</span>
<div style="left:660px;top:456px;width:144px;height:34px;background:#fff;border:1px solid #cdc7c2;border-radius:5px;"></div>
<div style="left:733px;top:457px;width:1px;height:32px;background:#ecebe8;"></div>
<div style="left:768px;top:457px;width:1px;height:32px;background:#ecebe8;"></div>
<span class="t f" style="left:669.50px;top:463.45px;font-size:14px;line-height:18px;height:18px;color:#1a1a1a;letter-spacing:0.036px;">199125</span>
<svg style="left:734px;top:456px" width="70" height="34" viewBox="0 0 70 34"><path d="M12 17H22 M46.5 17H57 M51.8 11.8V22.3" stroke="#2e3436" stroke-width="1.8" fill="none"/></svg>
<div style="left:660px;top:495px;width:144px;height:34px;background:#fff;border:2px solid #4173b6;border-radius:5px;box-shadow:0 0 0 1px rgba(120,170,235,.28);"></div>
<div style="left:733px;top:497px;width:1px;height:30px;background:#ecebe8;"></div>
<div style="left:768px;top:497px;width:1px;height:30px;background:#ecebe8;"></div>
<span class="t f" style="left:669.50px;top:502.45px;font-size:14px;line-height:18px;height:18px;color:#1a1a1a;letter-spacing:-0.430px;">530</span>
<svg style="left:734px;top:495px" width="70" height="34" viewBox="0 0 70 34"><path d="M12 17H22 M46.5 17H57 M51.8 11.8V22.3" stroke="#2e3436" stroke-width="1.8" fill="none"/></svg>
<div style="left:693px;top:503px;width:1px;height:17px;background:#111;"></div>
<div style="left:660px;top:534px;width:144px;height:34px;background:#fff;border:1px solid #cdc7c2;border-radius:5px;"></div>
<div style="left:733px;top:535px;width:1px;height:32px;background:#ecebe8;"></div>
<div style="left:768px;top:535px;width:1px;height:32px;background:#ecebe8;"></div>
<span class="t f" style="left:669.50px;top:541.45px;font-size:14px;line-height:18px;height:18px;color:#1a1a1a;">2</span>
<svg style="left:734px;top:534px" width="70" height="34" viewBox="0 0 70 34"><path d="M12 17H22 M46.5 17H57 M51.8 11.8V22.3" stroke="#2e3436" stroke-width="1.8" fill="none"/></svg>
<div style="left:660px;top:573px;width:144px;height:34px;background:linear-gradient(#f6f5f4,#ebe9e7);border:1px solid #cdc7c2;border-bottom-color:#bfb8b1;border-radius:5px;"></div>
<span class="t f" style="left:672.00px;top:579.65px;font-size:14px;line-height:18px;height:18px;color:#2e3436;letter-spacing:0.188px;">MiB</span>
<svg style="left:780px;top:587px" width="12" height="8" viewBox="0 0 12 8"><path d="M0.8 1 L11 1 L5.9 7 Z" fill="#2e3436"/></svg>
<div style="left:652px;top:617px;width:127px;height:34px;background:linear-gradient(#f5f4f3,#eae8e6);border:1px solid #cdc7c2;border-bottom-color:#bfb8b1;border-radius:5px;"></div>
<svg style="left:685px;top:623px" width="16.5" height="18" viewBox="0 0 16.5 18"><defs><linearGradient id="rx" x1="0" y1="0" x2="0" y2="1"><stop offset="0" stop-color="#f9797b"/><stop offset="1" stop-color="#ef4a50"/></linearGradient></defs><path d="M3.6 0.8 L8.2 5.6 L12.4 0.9 L15.6 3.6 L11.2 8.6 L14.8 14.8 L11.4 16.9 L8 11.8 L4 16.8 L0.9 14.3 L5.2 8.8 L0.8 3.7 Z" fill="url(#rx)" stroke="#cf2f36" stroke-width="1" stroke-linejoin="round"/></svg>
<span class="t f" style="left:704.40px;top:624.65px;font-size:14px;line-height:18px;height:18px;color:#2e3436;letter-spacing:-0.139px;">Cancel</span>
<div style="left:783px;top:617px;width:127px;height:34px;background:linear-gradient(#fbfbfa,#f6f5f4);border:1px solid #cdc7c2;border-bottom-color:#bfb8b1;border-radius:5px;"></div>
<svg style="left:797px;top:628px" width="15" height="11.5" viewBox="0 0 15 11.5"><path d="M1 4 H6.2 V0.8 L10.6 5.5 L6.2 10.2 V7 H1 Z" fill="#cfe9a5" stroke="#5e9a1c" stroke-width="1"/><rect x="11.3" y="0.7" width="2.6" height="9.8" fill="#8fcb3d" stroke="#5e9a1c" stroke-width=".9"/></svg>
<span class="t f" style="left:815.50px;top:624.05px;font-size:14px;line-height:18px;height:18px;color:#2e3436;letter-spacing:0.108px;">Resize/Move</span>
<div style="left:0px;top:734px;width:1024px;height:1px;background:#55575a;"></div>
<div style="left:0px;top:735px;width:1024px;height:33px;background:#f6f5f4;"></div>
<svg style="left:4px;top:740px" width="23" height="24" viewBox="0 0 23 24"><path d="M3.4 3.6 L19.6 20.6 M19.6 3.6 L3.4 20.6" stroke="#1f9fd6" stroke-width="6.2" fill="none"/><path d="M4.4 13.6 Q4.2 10.6 7.6 10.4 L11.4 10 Q12.4 7.2 13.8 7.4 L14.4 9 Q16.6 7.6 18.6 8.4 Q20.4 9.4 19.4 10.8 L17.2 11.8 Q16.4 14.8 12.8 14.8 L8.2 15.4 Q5 15.8 4.4 13.6 Z" fill="#0b0b0b"/></svg>
<svg style="left:33.5px;top:742px" width="21" height="20" viewBox="0 0 21 20"><rect x="0.3" y="0.3" width="20" height="19.4" rx="2.4" fill="#3a3a3a"/><rect x="0.3" y="0.3" width="20" height="1.2" rx="0.6" fill="#5a5a5a"/><rect x="0.3" y="17.2" width="20" height="2.5" rx="1.2" fill="#2b2b2b"/><text x="2.7" y="8.8" font-family="Liberation Sans" font-weight="700" font-size="7.6" fill="#fff">$</text><rect x="8.4" y="8.7" width="4.4" height="1.4" fill="#fff"/></svg>
<svg style="left:65px;top:740.5px" width="22" height="22.5" viewBox="0 0 22 22.5"><defs><linearGradient id="ffo" x1=".85" y1=".05" x2=".25" y2="1"><stop offset="0" stop-color="#fff14a"/><stop offset=".3" stop-color="#ffac2c"/><stop offset=".62" stop-color="#ff5538"/><stop offset="1" stop-color="#e21d6e"/></linearGradient><radialGradient id="ffi" cx=".45" cy=".65" r=".7"><stop offset="0" stop-color="#5a5cf0"/><stop offset="1" stop-color="#8a3fd8"/></radialGradient></defs><circle cx="11" cy="11.9" r="10.2" fill="url(#ffo)"/><path d="M11.6 3.4 Q12.8 1 15.4 0.2 Q15 2.6 17.6 4.6 Z" fill="#ffe54a"/><path d="M2.2 6.8 L3.6 4.2 L5 6 L6.6 3.6 L7.4 6.6 Z" fill="#ff9426"/><circle cx="10.6" cy="11.6" r="4.8" fill="url(#ffi)"/><path d="M4.4 8.4 Q6.8 5.8 10 6.8 Q13 7.6 13.8 9.6 Q11.2 9 10 10.4 Q9 11.9 7.4 11.7 Q5.4 11.4 4.4 8.4 Z" fill="#ff9a2c"/></svg>
<svg style="left:97.5px;top:744.5px" width="21" height="16" viewBox="0 0 20 15.5"><path d="M2.6 0.5 H17.4 L19.6 10.2 V13.4 Q19.6 15.1 18 15.1 H2 Q0.4 15.1 0.4 13.4 V10.2 Z" fill="#2b2c2b"/><path d="M3.4 1.4 H16.6 L18.5 10 H1.5 Z" fill="#a3a5a2"/><ellipse cx="10" cy="5.8" rx="7" ry="4.2" fill="#3d3f3d"/><ellipse cx="10" cy="5.8" rx="5.9" ry="3.3" fill="#f3ead9"/><path d="M10 5.8 L4.5 4.6 A5.9 3.3 0 0 1 15.9 5.9 Z" fill="#84c545"/><path d="M10 5.8 L15.9 5.9 A5.9 3.3 0 0 1 11.4 9 Z" fill="#dd6a63"/><rect x="1.3" y="10" width="17.4" height="2.7" fill="#d9dbd8"/><rect x="1.3" y="10" width="3" height="2.7" fill="#f4f5f4"/><rect x="9" y="13.3" width="5" height="1" fill="#3f8f6d"/></svg>
<svg style="left:129px;top:740.5px" width="22" height="22.5" viewBox="0 0 22 22.5"><rect x="0.5" y="2" width="21" height="20" fill="#f7f7f7" stroke="#aeb0b2"/><path d="M4 1.2 H18" stroke="#6d6d6d" stroke-width="2.4" stroke-dasharray="1.3 0.7"/><path d="M2.6 19.2 Q3.4 10.6 8.4 7 Q12.6 4.2 17.6 5 Q15.4 6.2 15.2 7.4 Q13.6 9.8 11.6 10.2 Q9.8 13.2 6.6 14 Q4.4 16 2.6 19.2 Z" fill="#3b78b9"/><path d="M2.2 20.4 L4.4 15.8" stroke="#1c1c1c" stroke-width="1.3"/><path d="M13 13.2 H19 M14 16 H19 M8 18.6 H13" stroke="#cfe0f0" stroke-width=".8"/></svg>
<svg style="left:159.5px;top:739.7px" width="25" height="25" viewBox="0 0 25 25"><circle cx="12.4" cy="12.3" r="11.9" fill="#2b2b2b"/><circle cx="12.4" cy="12.3" r="9.2" fill="#f4f4f3"/><path d="M12.4 12.3 L4.4 4.3 M12.4 12.3 L20.4 4.3 M12.4 12.3 L4.4 20.3 M12.4 12.3 L20.4 20.3" stroke="#2b2b2b" stroke-width="3.6"/><circle cx="12.4" cy="12.3" r="5" fill="#2b2b2b"/><circle cx="12.4" cy="12.3" r="3.3" fill="#f4f4f3"/></svg>
<div style="left:190px;top:747px;width:4px;height:1px;background:#9a9a98;"></div>
<div style="left:190px;top:751px;width:4px;height:1px;background:#9a9a98;"></div>
<div style="left:190px;top:755px;width:4px;height:1px;background:#9a9a98;"></div>
<div style="left:196.5px;top:736.5px;width:198px;height:30.5px;background:linear-gradient(#f7f6f5,#ebe9e7);border:1px solid #cdc7c2;border-radius:5px;"></div>
<svg style="left:200px;top:745px" width="17" height="14" viewBox="0 0 17 14"><rect x="0.5" y="0.5" width="15.5" height="13" rx="1.5" fill="#3a3a38"/><rect x="1.8" y="1.8" width="13" height="8.6" fill="#e9dcc0"/><path d="M6 2 H14.6 V8 Z" fill="#88c43a"/><path d="M2 7 L8 5 L10 9.8 H2 Z" fill="#e4a08c" opacity=".7"/><rect x="10.5" y="11.3" width="4" height="1" fill="#8a8"/></svg>
<span class="t f" style="left:225.00px;top:741.95px;font-size:14px;line-height:18px;height:18px;color:#2e3436;letter-spacing:0.028px;">/dev/sdb - GParted</span>
<div style="left:396.5px;top:736.5px;width:199px;height:30.5px;background:linear-gradient(#f7f6f5,#ebe9e7);border:1px solid #cdc7c2;border-radius:5px;"></div>
<svg style="left:400px;top:744px" width="16" height="16" viewBox="0 0 16 16"><rect x="0" y="0" width="16" height="16" fill="#b4c0c8"/><rect x="1" y="1" width="14" height="14" fill="#22343d"/><path d="M3.2 4.0 L7.0 6.7 L3.2 9.6" fill="none" stroke="#fff" stroke-width="1.7"/><rect x="8.0" y="10.9" width="4.8" height="1.8" fill="#fff"/></svg>
<span class="t f" style="left:425.40px;top:741.95px;font-size:14px;line-height:18px;height:18px;color:#2e3436;letter-spacing:0.232px;">Terminal - root@sysresc...</span>
<svg style="left:918px;top:744px" width="22" height="15" viewBox="0 0 22 15"><path d="M0.8 5 H4 L8.4 0.8 V14.2 L4 10 H0.8 Z" fill="#2e3436"/><path d="M11 4.4 Q12.8 7.5 11 10.6 M14 2.6 Q17 7.5 14 12.4 M17.2 0.8 Q21.2 7.5 17.2 14.2" fill="none" stroke="#2e3436" stroke-width="1.5"/></svg>
<svg style="left:948px;top:742px" width="20" height="20" viewBox="0 0 20 20"><defs><linearGradient id="og" x1="0" y1="0" x2="0" y2="1"><stop offset="0" stop-color="#f68d3c"/><stop offset="1" stop-color="#ef6a1d"/></linearGradient></defs><rect x="0.3" y="0.3" width="19.4" height="19.4" fill="url(#og)" stroke="#d4611f" stroke-width=".6"/><path d="M6.6 7 L4.2 10 L6.6 13 M13.4 7 L15.8 10 L13.4 13" fill="none" stroke="#fff" stroke-width="1.3"/><path d="M8 10 H12" stroke="#fbd0b0" stroke-width="1" stroke-dasharray="1 1"/></svg>
<span class="t f" style="left:972.70px;top:744.25px;font-size:11.4px;line-height:15px;height:15px;color:#2e3436;letter-spacing:0.565px;">13:43:21</span>
<svg style="left:838.6px;top:634.4px" width="20" height="24" viewBox="0 0 18 22"><path d="M2.8 2.2 L2.8 17.2 L6.3 13.9 L8.9 19.6 L11.3 18.5 L8.8 13 L13.6 13 Z" fill="#111" stroke="#fff" stroke-width="1.2" stroke-linejoin="round"/></svg>
</div>
</body></html>
